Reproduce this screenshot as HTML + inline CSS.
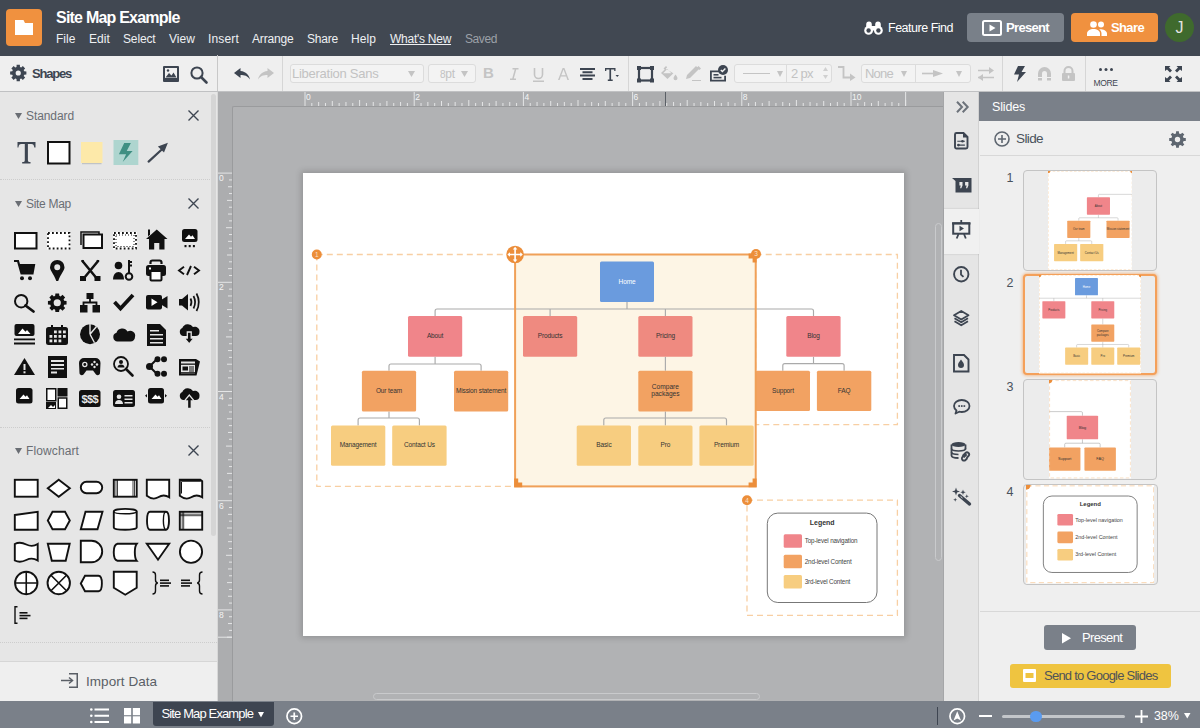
<!DOCTYPE html>
<html><head><meta charset="utf-8">
<style>
*{margin:0;padding:0;box-sizing:border-box}
body{width:1200px;height:728px;overflow:hidden;position:relative;font-family:"Liberation Sans",sans-serif;background:#b1b2b4}
.a{position:absolute}
svg{position:absolute;overflow:visible}
.hdr{left:0;top:0;width:1200px;height:56px;background:#414852}
.menu{top:32px;color:#eef0f2;font-size:12px;line-height:14px;white-space:nowrap}
.tb{left:0;top:56px;width:1200px;height:36px;background:#efefef;border-bottom:1px solid #c0c1c3}
.vdiv{width:1px;background:#d6d6d6}
.box{border:1px solid #dcdcdc;border-radius:3px;background:#f3f3f3}
.lp{left:0;top:92px;width:217px;height:609px;background:#e6e6e6}
.sh{color:#6a6e74;font-size:12px;line-height:14px}
.hline{height:1px;background:#d0d0d0}
.bb{left:0;top:701px;width:1200px;height:27px;background:#7a8089}
.rs{left:943px;top:92px;width:35px;height:609px;background:#e5e5e5;border-left:1px solid #a5a6a8}
.sp{left:978px;top:92px;width:222px;height:609px;background:#efefef;border-left:1px solid #d2d2d2}
.ico{fill:#3d4551}
.lt{fill:#c4c4c4}
</style></head><body>

<!-- HEADER -->
<div class="a hdr"></div>
<div class="a" style="left:6px;top:9px;width:36px;height:37px;background:#f0913f;border-radius:4px"></div>
<svg style="left:15px;top:20px" width="18" height="15" viewBox="0 0 18 15"><path d="M0 0H8.5L10 3H18V15H0Z" fill="#fff"/></svg>
<div class="a" style="left:56px;top:8px;color:#fff;font-weight:bold;font-size:16px;line-height:20px;letter-spacing:-0.78px">Site Map Example</div>
<div class="a menu" style="letter-spacing:0.04px;left:56px">File</div>
<div class="a menu" style="letter-spacing:0.08px;left:89px">Edit</div>
<div class="a menu" style="letter-spacing:-0.14px;left:123px">Select</div>
<div class="a menu" style="letter-spacing:0.05px;left:169px">View</div>
<div class="a menu" style="letter-spacing:0.16px;left:208px">Insert</div>
<div class="a menu" style="letter-spacing:-0.17px;left:252px">Arrange</div>
<div class="a menu" style="letter-spacing:-0.21px;left:307px">Share</div>
<div class="a menu" style="letter-spacing:0.08px;left:351px">Help</div>
<div class="a menu" style="letter-spacing:-0.26px;left:390px;text-decoration:underline">What's New</div>
<div class="a menu" style="letter-spacing:-0.41px;left:465px;color:#9ca1a8">Saved</div>

<!-- HEADER RIGHT -->
<svg style="left:864px;top:21px" width="19" height="14" viewBox="0 0 19 14"><path d="M2.2 8V3.5Q2.2 0.5 5 0.5Q7.8 0.5 7.8 3.5V5h3.4V3.5Q11.2 0.5 14 0.5Q16.8 0.5 16.8 3.5V8Z" fill="#fff"/><circle cx="4.6" cy="9.4" r="4.4" fill="#fff"/><circle cx="14.4" cy="9.4" r="4.4" fill="#fff"/><rect x="7" y="6" width="5" height="3.5" fill="#fff"/><circle cx="4.6" cy="9.5" r="2.2" fill="#414852"/><circle cx="14.4" cy="9.5" r="2.2" fill="#414852"/></svg>
<div class="a" style="left:888px;top:21px;color:#fff;font-size:12.5px;line-height:14px;letter-spacing:-0.49px">Feature Find</div>
<div class="a" style="left:967px;top:13px;width:97px;height:29px;background:#798089;border-radius:4px"></div>
<svg style="left:982px;top:19.5px" width="20" height="16" viewBox="0 0 20 16"><rect x="1" y="1" width="18" height="14" rx="1.5" fill="none" stroke="#fff" stroke-width="2"/><path d="M7.5 4.5L13.5 8L7.5 11.5Z" fill="#fff"/></svg>
<div class="a" style="left:1006px;top:20px;color:#fff;font-weight:bold;font-size:13px;line-height:15px;letter-spacing:-0.67px">Present</div>
<div class="a" style="left:1071px;top:13px;width:87px;height:29px;background:#f0913f;border-radius:4px"></div>
<svg style="left:1087px;top:20.5px" width="20" height="15" viewBox="0 0 20 15"><circle cx="6.5" cy="3.5" r="3.3" fill="#fff"/><circle cx="14" cy="3.5" r="3" fill="#fff"/><path d="M0 15v-2.5C0 10 3 8 6.5 8S13 10 13 12.5V15Z" fill="#fff"/><path d="M12 8.3C15.5 8 20 9.5 20 12.5V15h-5.5v-2.5c0-1.8-1-3.2-2.5-4.2Z" fill="#fff"/></svg>
<div class="a" style="left:1111px;top:20px;color:#fff;font-weight:bold;font-size:13px;line-height:15px;letter-spacing:-0.63px">Share</div>
<div class="a" style="left:1165px;top:13px;width:29px;height:29px;background:#3f6a2d;border-radius:50%"></div>
<div class="a" style="left:1165px;top:19px;width:29px;text-align:center;color:#e4e4e4;font-size:16px;line-height:18px">J</div>

<!-- TOOLBAR -->
<div class="a tb"></div>
<div class="a vdiv" style="left:217px;top:55px;height:36px;background:#c8c8c8"></div>
<svg style="left:9.5px;top:64.5px" width="17" height="16" viewBox="0 0 17 16"><path fill-rule="evenodd" class="ico" d="M6.52 2.05 L6.63 -0.14 L9.87 -0.14 L9.98 2.05 L11.24 2.57 L12.86 1.10 L15.15 3.39 L13.68 5.01 L14.20 6.27 L16.39 6.38 L16.39 9.62 L14.20 9.73 L13.68 10.99 L15.15 12.61 L12.86 14.90 L11.24 13.43 L9.98 13.95 L9.87 16.14 L6.63 16.14 L6.52 13.95 L5.26 13.43 L3.64 14.90 L1.35 12.61 L2.82 10.99 L2.30 9.73 L0.11 9.62 L0.11 6.38 L2.30 6.27 L2.82 5.01 L1.35 3.39 L3.64 1.10 L5.26 2.57ZM10.85 8.00A2.6 2.6 0 1 0 5.65 8.00A2.6 2.6 0 1 0 10.85 8.00Z"/></svg>
<div class="a" style="left:32px;top:66px;color:#3d4551;font-weight:bold;font-size:13px;line-height:15px;letter-spacing:-1.21px">Shapes</div>
<svg style="left:162.5px;top:65.5px" width="16" height="16" viewBox="0 0 16 16"><rect x="0" y="0" width="16" height="16" rx="1" class="ico"/><rect x="2" y="2" width="12" height="10" fill="#f1f1f1"/><path d="M2.5 11.5L6 7l2.5 2.5L10.5 6.5 13.5 11.5Z" class="ico"/><circle cx="5" cy="4.5" r="1.2" class="ico"/></svg>
<svg style="left:190px;top:65.5px" width="18" height="18" viewBox="0 0 18 18"><circle cx="7" cy="7" r="5.6" fill="none" stroke="#3d4551" stroke-width="2"/><path d="M11 11L16.5 16.5" stroke="#3d4551" stroke-width="2.6" stroke-linecap="round"/></svg>
<!-- undo redo -->
<svg style="left:233.5px;top:67.5px" width="16" height="12" viewBox="0 0 16 12"><path d="M6.5 0L0 5l6.5 5V7c4 0 7 .8 9.5 4.5C15 7 12 3.5 6.5 3Z" class="ico"/></svg>
<svg style="left:257.5px;top:67.5px" width="16" height="12" viewBox="0 0 16 12"><path d="M9.5 0L16 5l-6.5 5V7C5.5 7 2.5 7.8 0 11.5 1 7 4 3.5 9.5 3Z" class="lt"/></svg>
<div class="a vdiv" style="left:282px;top:56px;height:35px"></div>
<div class="a box" style="left:289.5px;top:64px;width:134px;height:19px"></div>
<div class="a" style="left:292px;top:66px;color:#c2c2c2;font-size:13px;line-height:15px;letter-spacing:-0.26px">Liberation Sans</div>
<svg style="left:407.5px;top:71px" width="7" height="6" viewBox="0 0 7 6"><path d="M0 0H7L3.5 6Z" class="lt"/></svg>
<div class="a box" style="left:428px;top:64px;width:47.5px;height:19px"></div>
<div class="a" style="left:440px;top:67px;color:#c2c2c2;font-size:12px;line-height:14px;letter-spacing:-0.3px"><span style="font-size:10px">8</span>pt</div>
<svg style="left:461px;top:71px" width="7" height="6" viewBox="0 0 7 6"><path d="M0 0H7L3.5 6Z" class="lt"/></svg>
<div class="a" style="left:483px;top:64px;color:#c4c4c4;font-weight:bold;font-size:15px;line-height:18px">B</div>
<svg style="left:509.5px;top:68px" width="9" height="12" viewBox="0 0 9 12"><path d="M2.5 0.75h6M0 11.25h6M5.7 0.75L2.8 11.25" stroke="#c4c4c4" stroke-width="1.5" fill="none"/></svg>
<svg style="left:532.5px;top:67.5px" width="11" height="14" viewBox="0 0 11 14"><path d="M1.5 0v6.5a4 4 0 0 0 8 0V0" fill="none" stroke="#c4c4c4" stroke-width="1.6"/><rect x="0" y="12.5" width="11" height="1.5" class="lt"/></svg>
<svg style="left:557.5px;top:68px" width="11" height="12" viewBox="0 0 11 12"><path d="M0 12L4.6 0h1.8L11 12H9.4L8.2 8.6H2.8L1.6 12ZM3.3 7.2h4.4L5.5 1.5Z" class="lt"/></svg>
<svg style="left:580px;top:68px" width="15" height="12" viewBox="0 0 15 12"><path d="M0 0h15v2H0ZM2.5 3.3h10v2h-10ZM0 6.6h15v2H0ZM2.5 10h10v2h-10Z" class="ico"/></svg>
<svg style="left:605px;top:67.5px" width="14" height="13" viewBox="0 0 14 13"><path d="M0 0h10.5v3H9.2V1.5H6.1v10H7.7V13H2.8v-1.5H4.4v-10H1.3V3H0Z" class="ico"/><path d="M10.5 7h3.5l-1.75 2Z" class="ico"/></svg>
<div class="a vdiv" style="left:628px;top:56px;height:35px"></div>
<svg style="left:637px;top:65.5px" width="17" height="16.5" viewBox="0 0 17 16.5"><rect x="2" y="2" width="13" height="12.5" fill="none" stroke="#3d4551" stroke-width="2.2"/><rect x="0" y="0" width="4" height="4" class="ico"/><rect x="13" y="0" width="4" height="4" class="ico"/><rect x="0" y="12.5" width="4" height="4" class="ico"/><rect x="13" y="12.5" width="4" height="4" class="ico"/></svg>
<svg style="left:661px;top:66px" width="17" height="15" viewBox="0 0 17 15"><path d="M5 0l1.2 1.2-1.5 1.5L12.4 7.2 6.5 13 0 7 3.7 3.6 2.5 2.5ZM2.2 7.2h8.2L6.3 3.1Z" class="lt"/><path d="M14.5 8.5c1 1.5 2 2.6 2 3.8a2 2 0 0 1-4 0c0-1.2 1-2.3 2-3.8Z" class="lt"/></svg>
<svg style="left:686px;top:66px" width="15" height="15" viewBox="0 0 15 15"><path d="M0 13l1-4L10 0l3 3-9 9ZM11 1.5l1.5-1.5 2.5 2.5L13.5 4Z" class="lt"/><rect x="6" y="14" width="9" height="1" class="lt"/></svg>
<svg style="left:708.5px;top:65px" width="19" height="16.5" viewBox="0 0 19 16.5"><path d="M1 5.5h9v1.8H2.8v7.4h12.4v-4H17v5.8H1Z" class="ico"/><rect x="4.5" y="9" width="5" height="1.6" class="ico"/><rect x="4.5" y="11.8" width="8" height="1.6" class="ico"/><circle cx="14" cy="5" r="5" class="ico"/><path d="M11.8 5l1.6 1.6 3-3" fill="none" stroke="#f1f1f1" stroke-width="1.4"/></svg>
<div class="a box" style="left:733.5px;top:64px;width:98.5px;height:19px"></div>
<div class="a vdiv" style="left:786px;top:65px;height:17px;background:#dcdcdc"></div>
<div class="a" style="left:743px;top:73px;width:26.5px;height:1.2px;background:#c4c4c4"></div>
<svg style="left:777px;top:71px" width="6" height="6" viewBox="0 0 6 6"><path d="M0 0H6L3 6Z" class="lt"/></svg>
<div class="a" style="left:791px;top:66px;color:#c2c2c2;font-size:13px;line-height:15px;letter-spacing:-0.71px">2 px</div>
<svg style="left:823px;top:67px" width="5" height="12" viewBox="0 0 5 12"><path d="M0 4L2.5 0 5 4ZM0 8h5l-2.5 4Z" fill="#d0d0d0"/></svg>
<svg style="left:838px;top:65.5px" width="18" height="15" viewBox="0 0 18 15"><path d="M0 1h5.5v10.5H13" fill="none" stroke="#c4c4c4" stroke-width="1.8"/><path d="M12 7.5l5.5 4L12 15Z" class="lt"/></svg>
<div class="a box" style="left:861px;top:64px;width:109.5px;height:19px"></div>
<div class="a vdiv" style="left:915px;top:65px;height:17px;background:#dcdcdc"></div>
<div class="a" style="left:865px;top:66px;color:#c2c2c2;font-size:13px;line-height:15px;letter-spacing:-0.77px">None</div>
<svg style="left:900.5px;top:71px" width="6" height="6" viewBox="0 0 6 6"><path d="M0 0H6L3 6Z" class="lt"/></svg>
<svg style="left:922px;top:70px" width="21" height="7" viewBox="0 0 21 7"><rect x="0" y="2.7" width="14" height="1.6" class="lt"/><path d="M11 0l10 3.5L11 7Z" class="lt"/></svg>
<svg style="left:955.5px;top:71px" width="6" height="6" viewBox="0 0 6 6"><path d="M0 0H6L3 6Z" class="lt"/></svg>
<svg style="left:978px;top:67px" width="16" height="14" viewBox="0 0 16 14"><path d="M0 3.5h12M0 10.5h16" stroke="#c4c4c4" stroke-width="1.6"/><path d="M11 0l5 3.5-5 3.5ZM5 7l-5 3.5L5 14Z" class="lt"/></svg>
<div class="a vdiv" style="left:1002px;top:56px;height:35px"></div>
<svg style="left:1013.5px;top:66px" width="12" height="16" viewBox="0 0 12 16"><path d="M4 0h7L7.5 6H12L3 16l2-7.5H0Z" class="ico"/></svg>
<svg style="left:1037.5px;top:67px" width="13" height="13.5" viewBox="0 0 13 13.5"><path d="M0 6.5a6.5 6.5 0 0 1 13 0v7h-4v-7a2.5 2.5 0 0 0-5 0v7H0Z" class="lt"/><rect x="0" y="10" width="4" height="1" fill="#f1f1f1"/><rect x="9" y="10" width="4" height="1" fill="#f1f1f1"/></svg>
<svg style="left:1061.5px;top:66.5px" width="13" height="14" viewBox="0 0 13 14"><path d="M2.5 6V4a4 4 0 0 1 8 0v2" fill="none" stroke="#c4c4c4" stroke-width="2"/><rect x="0" y="6" width="13" height="8" rx="1" class="lt"/><rect x="5.8" y="8.5" width="1.5" height="3" fill="#f1f1f1"/></svg>
<div class="a vdiv" style="left:1085px;top:56px;height:35px"></div>
<svg style="left:1099px;top:67.5px" width="14" height="3" viewBox="0 0 14 3"><circle cx="1.5" cy="1.5" r="1.5" class="ico"/><circle cx="7" cy="1.5" r="1.5" class="ico"/><circle cx="12.5" cy="1.5" r="1.5" class="ico"/></svg>
<div class="a" style="left:1093.5px;top:79px;color:#3d4551;font-size:8.5px;line-height:9px;letter-spacing:-0.35px">MORE</div>
<svg style="left:1165px;top:66px" width="17" height="16" viewBox="0 0 17 16"><path d="M0 0h5.5L4 1.5l3 3L5 6.5l-3-3L0 5ZM17 0h-5.5L13 1.5l-3 3L12 6.5l3-3L17 5ZM0 16h5.5L4 14.5l3-3L5 9.5l-3 3L0 11ZM17 16h-5.5L13 14.5l-3-3L12 9.5l3 3L17 11Z" class="ico"/></svg>

<!-- CANVAS -->
<div class="a" style="left:218px;top:92px;width:725px;height:609px;background:#acadaf"></div>
<div class="a" style="left:232px;top:106px;width:711px;height:595px;background:#b1b2b4;border-left:1.5px solid #9a9b9d;border-top:1.5px solid #9a9b9d;border-top-left-radius:2px"></div>
<svg style="left:232px;top:92px" width="711" height="14" viewBox="0 0 711 14"><g fill="#e4e5e6"><rect x="72.50" y="0" width="1" height="14"/><rect x="79.32" y="11" width="1" height="3"/><rect x="86.15" y="10" width="1" height="4"/><rect x="92.98" y="11" width="1" height="3"/><rect x="99.80" y="9" width="1" height="5"/><rect x="106.62" y="11" width="1" height="3"/><rect x="113.45" y="10" width="1" height="4"/><rect x="120.27" y="11" width="1" height="3"/><rect x="127.10" y="8" width="1" height="6"/><rect x="133.93" y="11" width="1" height="3"/><rect x="140.75" y="10" width="1" height="4"/><rect x="147.57" y="11" width="1" height="3"/><rect x="154.40" y="9" width="1" height="5"/><rect x="161.23" y="11" width="1" height="3"/><rect x="168.05" y="10" width="1" height="4"/><rect x="174.88" y="11" width="1" height="3"/><rect x="181.70" y="0" width="1" height="14"/><rect x="188.52" y="11" width="1" height="3"/><rect x="195.35" y="10" width="1" height="4"/><rect x="202.18" y="11" width="1" height="3"/><rect x="209.00" y="9" width="1" height="5"/><rect x="215.83" y="11" width="1" height="3"/><rect x="222.65" y="10" width="1" height="4"/><rect x="229.48" y="11" width="1" height="3"/><rect x="236.30" y="8" width="1" height="6"/><rect x="243.12" y="11" width="1" height="3"/><rect x="249.95" y="10" width="1" height="4"/><rect x="256.77" y="11" width="1" height="3"/><rect x="263.60" y="9" width="1" height="5"/><rect x="270.43" y="11" width="1" height="3"/><rect x="277.25" y="10" width="1" height="4"/><rect x="284.08" y="11" width="1" height="3"/><rect x="290.90" y="0" width="1" height="14"/><rect x="297.73" y="11" width="1" height="3"/><rect x="304.55" y="10" width="1" height="4"/><rect x="311.38" y="11" width="1" height="3"/><rect x="318.20" y="9" width="1" height="5"/><rect x="325.02" y="11" width="1" height="3"/><rect x="331.85" y="10" width="1" height="4"/><rect x="338.67" y="11" width="1" height="3"/><rect x="345.50" y="8" width="1" height="6"/><rect x="352.33" y="11" width="1" height="3"/><rect x="359.15" y="10" width="1" height="4"/><rect x="365.98" y="11" width="1" height="3"/><rect x="372.80" y="9" width="1" height="5"/><rect x="379.62" y="11" width="1" height="3"/><rect x="386.45" y="10" width="1" height="4"/><rect x="393.28" y="11" width="1" height="3"/><rect x="400.10" y="0" width="1" height="14"/><rect x="406.92" y="11" width="1" height="3"/><rect x="413.75" y="10" width="1" height="4"/><rect x="420.58" y="11" width="1" height="3"/><rect x="427.40" y="9" width="1" height="5"/><rect x="434.23" y="11" width="1" height="3"/><rect x="441.05" y="10" width="1" height="4"/><rect x="447.88" y="11" width="1" height="3"/><rect x="454.70" y="8" width="1" height="6"/><rect x="461.53" y="11" width="1" height="3"/><rect x="468.35" y="10" width="1" height="4"/><rect x="475.17" y="11" width="1" height="3"/><rect x="482.00" y="9" width="1" height="5"/><rect x="488.83" y="11" width="1" height="3"/><rect x="495.65" y="10" width="1" height="4"/><rect x="502.48" y="11" width="1" height="3"/><rect x="509.30" y="0" width="1" height="14"/><rect x="516.12" y="11" width="1" height="3"/><rect x="522.95" y="10" width="1" height="4"/><rect x="529.78" y="11" width="1" height="3"/><rect x="536.60" y="9" width="1" height="5"/><rect x="543.42" y="11" width="1" height="3"/><rect x="550.25" y="10" width="1" height="4"/><rect x="557.08" y="11" width="1" height="3"/><rect x="563.90" y="8" width="1" height="6"/><rect x="570.73" y="11" width="1" height="3"/><rect x="577.55" y="10" width="1" height="4"/><rect x="584.38" y="11" width="1" height="3"/><rect x="591.20" y="9" width="1" height="5"/><rect x="598.02" y="11" width="1" height="3"/><rect x="604.85" y="10" width="1" height="4"/><rect x="611.68" y="11" width="1" height="3"/><rect x="618.50" y="0" width="1" height="14"/><rect x="625.33" y="11" width="1" height="3"/><rect x="632.15" y="10" width="1" height="4"/><rect x="638.98" y="11" width="1" height="3"/><rect x="645.80" y="9" width="1" height="5"/><rect x="652.62" y="11" width="1" height="3"/><rect x="659.45" y="10" width="1" height="4"/><rect x="666.27" y="11" width="1" height="3"/><rect x="673.10" y="8" width="1" height="6"/></g><g fill="#f4f4f4" font-family="Liberation Sans" font-size="8.5"><text x="74.0" y="7.6">0</text><text x="183.2" y="7.6">2</text><text x="292.4" y="7.6">4</text><text x="401.6" y="7.6">6</text><text x="510.8" y="7.6">8</text><text x="620.0" y="7.6">10</text></g><rect x="673.10" y="0" width="1" height="14" fill="#e4e5e6"/><rect x="433" y="0" width="1" height="14" fill="#5a5f66"/></svg>
<svg style="left:218px;top:106px" width="14" height="595" viewBox="0 0 14 595"><g fill="#e4e5e6"><rect x="0" y="66.60" width="14" height="1"/><rect x="11" y="73.42" width="3" height="1"/><rect x="10" y="80.25" width="4" height="1"/><rect x="11" y="87.07" width="3" height="1"/><rect x="9" y="93.90" width="5" height="1"/><rect x="11" y="100.72" width="3" height="1"/><rect x="10" y="107.55" width="4" height="1"/><rect x="11" y="114.38" width="3" height="1"/><rect x="8" y="121.20" width="6" height="1"/><rect x="11" y="128.03" width="3" height="1"/><rect x="10" y="134.85" width="4" height="1"/><rect x="11" y="141.68" width="3" height="1"/><rect x="9" y="148.50" width="5" height="1"/><rect x="11" y="155.32" width="3" height="1"/><rect x="10" y="162.15" width="4" height="1"/><rect x="11" y="168.98" width="3" height="1"/><rect x="0" y="175.80" width="14" height="1"/><rect x="11" y="182.62" width="3" height="1"/><rect x="10" y="189.45" width="4" height="1"/><rect x="11" y="196.27" width="3" height="1"/><rect x="9" y="203.10" width="5" height="1"/><rect x="11" y="209.93" width="3" height="1"/><rect x="10" y="216.75" width="4" height="1"/><rect x="11" y="223.57" width="3" height="1"/><rect x="8" y="230.40" width="6" height="1"/><rect x="11" y="237.23" width="3" height="1"/><rect x="10" y="244.05" width="4" height="1"/><rect x="11" y="250.88" width="3" height="1"/><rect x="9" y="257.70" width="5" height="1"/><rect x="11" y="264.52" width="3" height="1"/><rect x="10" y="271.35" width="4" height="1"/><rect x="11" y="278.18" width="3" height="1"/><rect x="0" y="285.00" width="14" height="1"/><rect x="11" y="291.82" width="3" height="1"/><rect x="10" y="298.65" width="4" height="1"/><rect x="11" y="305.48" width="3" height="1"/><rect x="9" y="312.30" width="5" height="1"/><rect x="11" y="319.12" width="3" height="1"/><rect x="10" y="325.95" width="4" height="1"/><rect x="11" y="332.77" width="3" height="1"/><rect x="8" y="339.60" width="6" height="1"/><rect x="11" y="346.42" width="3" height="1"/><rect x="10" y="353.25" width="4" height="1"/><rect x="11" y="360.08" width="3" height="1"/><rect x="9" y="366.90" width="5" height="1"/><rect x="11" y="373.73" width="3" height="1"/><rect x="10" y="380.55" width="4" height="1"/><rect x="11" y="387.38" width="3" height="1"/><rect x="0" y="394.20" width="14" height="1"/><rect x="11" y="401.02" width="3" height="1"/><rect x="10" y="407.85" width="4" height="1"/><rect x="11" y="414.67" width="3" height="1"/><rect x="9" y="421.50" width="5" height="1"/><rect x="11" y="428.33" width="3" height="1"/><rect x="10" y="435.15" width="4" height="1"/><rect x="11" y="441.98" width="3" height="1"/><rect x="8" y="448.80" width="6" height="1"/><rect x="11" y="455.62" width="3" height="1"/><rect x="10" y="462.45" width="4" height="1"/><rect x="11" y="469.27" width="3" height="1"/><rect x="9" y="476.10" width="5" height="1"/><rect x="11" y="482.92" width="3" height="1"/><rect x="10" y="489.75" width="4" height="1"/><rect x="11" y="496.58" width="3" height="1"/><rect x="0" y="503.40" width="14" height="1"/><rect x="11" y="510.23" width="3" height="1"/><rect x="10" y="517.05" width="4" height="1"/><rect x="11" y="523.88" width="3" height="1"/><rect x="9" y="530.70" width="5" height="1"/><rect x="0" y="530.70" width="14" height="1"/></g><g fill="#f4f4f4" font-family="Liberation Sans" font-size="8.5"><text x="1" y="75.1">0</text><text x="1" y="184.3">2</text><text x="1" y="293.5">4</text><text x="1" y="402.7">6</text><text x="1" y="511.9">8</text></g></svg>
<div class="a" style="left:303px;top:172.5px;width:601px;height:463.5px;background:#fff;box-shadow:0 0 6px 2px rgba(0,0,0,0.17)"></div>
<!-- DIAGRAM -->
<svg style="left:0;top:0" width="1200" height="728" viewBox="0 0 1200 728" font-family="Liberation Sans">
<path d="M316.8 254.5H515M316.8 254.5V486.4H515" fill="none" stroke="#f8cfa3" stroke-width="1.3" stroke-dasharray="6 4"/>
<rect x="755.7" y="254.5" width="141.7" height="170.2" fill="none" stroke="#f8cfa3" stroke-width="1.3" stroke-dasharray="6 4"/>
<rect x="747" y="500.2" width="150.4" height="115.2" fill="none" stroke="#f8cfa3" stroke-width="1.3" stroke-dasharray="6 4"/>
<rect x="515.1" y="254.5" width="240.6" height="231.9" fill="#fdf5e5"/>
<path d="M627 302.1V309" fill="none" stroke="#aaaaaa" stroke-width="1.15"/><path d="M435.1 316V311Q435.1 309 437.1 309H811.5Q813.5 309 813.5 311V316" fill="none" stroke="#aaaaaa" stroke-width="1.15"/><path d="M550.1 309V316" fill="none" stroke="#aaaaaa" stroke-width="1.15"/><path d="M665.4 309V316" fill="none" stroke="#aaaaaa" stroke-width="1.15"/>
<path d="M435.1 356.8V364" fill="none" stroke="#aaaaaa" stroke-width="1.15"/><path d="M389 370.7V366Q389 364 391 364H479.1Q481.1 364 481.1 366V370.7" fill="none" stroke="#aaaaaa" stroke-width="1.15"/>
<path d="M389 411.4V418" fill="none" stroke="#aaaaaa" stroke-width="1.15"/><path d="M358.1 425.4V420Q358.1 418 360.1 418H417.4Q419.4 418 419.4 420V425.4" fill="none" stroke="#aaaaaa" stroke-width="1.15"/>
<path d="M665.4 356.8V370.7" fill="none" stroke="#aaaaaa" stroke-width="1.15"/>
<path d="M665.4 411.4V418" fill="none" stroke="#aaaaaa" stroke-width="1.15"/><path d="M603.8 425.4V420Q603.8 418 605.8 418H724.5Q726.5 418 726.5 420V425.4" fill="none" stroke="#aaaaaa" stroke-width="1.15"/><path d="M665.4 418V425.4" fill="none" stroke="#aaaaaa" stroke-width="1.15"/>
<path d="M813.5 356.8V363.6" fill="none" stroke="#aaaaaa" stroke-width="1.15"/><path d="M782.8 370.8V365.6Q782.8 363.6 784.8 363.6H842.1Q844.1 363.6 844.1 365.6V370.8" fill="none" stroke="#aaaaaa" stroke-width="1.15"/>
<rect x="600" y="261.4" width="54.0" height="40.7" rx="1.5" fill="#6a9bde"/><text x="627.0" y="283.6" font-size="6.5" fill="#fff" text-anchor="middle" letter-spacing="-0.12">Home</text>
<rect x="408" y="316" width="54.2" height="40.8" rx="1.5" fill="#f0858a"/><text x="435.1" y="338.3" font-size="6.5" fill="#333" text-anchor="middle" letter-spacing="-0.12">About</text>
<rect x="523" y="316" width="54.2" height="40.8" rx="1.5" fill="#ef8a80"/><text x="550.1" y="338.3" font-size="6.5" fill="#333" text-anchor="middle" letter-spacing="-0.12">Products</text>
<rect x="638.3" y="316" width="54.2" height="40.8" rx="1.5" fill="#ef8a80"/><text x="665.4" y="338.3" font-size="6.5" fill="#333" text-anchor="middle" letter-spacing="-0.12">Pricing</text>
<rect x="786.3" y="316" width="54.3" height="40.8" rx="1.5" fill="#f0858a"/><text x="813.5" y="338.3" font-size="6.5" fill="#333" text-anchor="middle" letter-spacing="-0.12">Blog</text>
<rect x="361.9" y="370.7" width="54.2" height="40.7" rx="1.5" fill="#f2a262"/><text x="389.0" y="392.9" font-size="6.5" fill="#333" text-anchor="middle" letter-spacing="-0.12">Our team</text>
<rect x="454" y="370.7" width="54.2" height="40.7" rx="1.5" fill="#f2a262"/><text x="481.1" y="392.9" font-size="6.5" fill="#333" text-anchor="middle" letter-spacing="-0.12">Mission statement</text>
<rect x="638.3" y="370.7" width="54.2" height="40.7" rx="1.5" fill="#f2a262"/><text x="665.4" y="389.0" font-size="6.6" fill="#333" text-anchor="middle">Compare</text><text x="665.4" y="396.4" font-size="6.6" fill="#333" text-anchor="middle">packages</text>
<rect x="755.7" y="370.8" width="54.3" height="40.3" rx="1.5" fill="#f2a262"/><text x="782.9" y="392.9" font-size="6.5" fill="#333" text-anchor="middle" letter-spacing="-0.12">Support</text>
<rect x="816.9" y="370.8" width="54.4" height="40.3" rx="1.5" fill="#f2a262"/><text x="844.1" y="392.9" font-size="6.5" fill="#333" text-anchor="middle" letter-spacing="-0.12">FAQ</text>
<rect x="331" y="425.4" width="54.3" height="40.3" rx="1.5" fill="#f7cd80"/><text x="358.1" y="447.4" font-size="6.5" fill="#333" text-anchor="middle" letter-spacing="-0.12">Management</text>
<rect x="392.2" y="425.4" width="54.4" height="40.3" rx="1.5" fill="#f7cd80"/><text x="419.4" y="447.4" font-size="6.5" fill="#333" text-anchor="middle" letter-spacing="-0.12">Contact Us</text>
<rect x="576.7" y="425.4" width="54.3" height="40.3" rx="1.5" fill="#f7cd80"/><text x="603.9" y="447.4" font-size="6.5" fill="#333" text-anchor="middle" letter-spacing="-0.12">Basic</text>
<rect x="638.3" y="425.4" width="54.2" height="40.3" rx="1.5" fill="#f7cd80"/><text x="665.4" y="447.4" font-size="6.5" fill="#333" text-anchor="middle" letter-spacing="-0.12">Pro</text>
<rect x="699.4" y="425.4" width="54.3" height="40.3" rx="1.5" fill="#f7cd80"/><text x="726.5" y="447.4" font-size="6.5" fill="#333" text-anchor="middle" letter-spacing="-0.12">Premium</text>
<rect x="515.1" y="254.5" width="240.6" height="231.9" fill="none" stroke="#f0a058" stroke-width="2"/>
<path d="M514.2 487.3V478.5h4v4h4v4.8Z" fill="#ec8e3a"/>
<path d="M756.6 487.3V478.5h-4v4h-4v4.8Z" fill="#ec8e3a"/>
<path d="M756.6 253.6V262.4h-4v-4h-4v-4.8Z" fill="#ec8e3a"/>
<circle cx="515.1" cy="254.5" r="8.8" fill="#ec8e3a"/><path d="M515.1 248v13M508.6 254.5h13" stroke="#fff" stroke-width="1.6"/><path d="M515.1 246.8l-2.3 2.6h4.6ZM515.1 262.2l-2.3-2.6h4.6ZM507.4 254.5l2.6-2.3v4.6ZM522.8 254.5l-2.6-2.3v4.6Z" fill="#fff"/>
<circle cx="316.8" cy="254.5" r="5" fill="#ec8e3a"/><text x="316.8" y="256.8" font-size="6.5" fill="#fbe3c8" text-anchor="middle">1</text><circle cx="756" cy="254" r="5" fill="#ec8e3a"/><text x="756" y="256.3" font-size="6.5" fill="#fbe3c8" text-anchor="middle">3</text><circle cx="747" cy="500.2" r="5" fill="#ec8e3a"/><text x="747" y="502.5" font-size="6.5" fill="#fbe3c8" text-anchor="middle">4</text>
<rect x="767.3" y="513.1" width="109.7" height="89.4" rx="10.5" fill="#fff" stroke="#777" stroke-width="1"/>
<text x="822.2" y="525" font-size="7" font-weight="bold" fill="#333" text-anchor="middle">Legend</text>
<rect x="783.7" y="534.2" width="18.3" height="13.5" rx="1.5" fill="#f0858a"/><text x="804.7" y="543.0" font-size="6.3" fill="#444" letter-spacing="-0.15">Top-level navigation</text>
<rect x="783.7" y="554.7" width="18.3" height="13.5" rx="1.5" fill="#f2a262"/><text x="804.7" y="563.5" font-size="6.3" fill="#444" letter-spacing="-0.15">2nd-level Content</text>
<rect x="783.7" y="575" width="18.3" height="13.5" rx="1.5" fill="#f7cd80"/><text x="804.7" y="583.8" font-size="6.3" fill="#444" letter-spacing="-0.15">3rd-level Content</text>
</svg>
<!-- /DIAGRAM -->
<div class="a" style="left:373px;top:693px;width:387px;height:7px;border:1.5px solid #c9cacc;border-radius:4px"></div>
<div class="a" style="left:934.5px;top:222.5px;width:7px;height:338px;border:1.5px solid #c9cacc;border-radius:4px"></div>

<!-- LEFT PANEL -->
<div class="a lp"></div>
<div class="a" style="left:211px;top:94px;width:5px;height:442px;background:#d5d5d5;border-radius:3px"></div>
<div class="a" style="left:0;top:661px;width:217px;height:40px;background:#efefef;border-top:1px solid #d6d6d6"></div>
<div class="a" style="left:0;top:179px;width:210px;height:1px;border-top:1px dotted #cdcdcd"></div>
<div class="a" style="left:0;top:427px;width:210px;height:1px;border-top:1px dotted #cdcdcd"></div>
<div class="a" style="left:0;top:642px;width:217px;height:1px;border-top:1px dotted #cdcdcd"></div>
<div class="a" style="left:217px;top:92px;width:1px;height:609px;background:#d8d8d8"></div>
<svg style="left:15px;top:112.5px" width="7" height="6" viewBox="0 0 7 6"><path d="M0 0H7L3.5 6Z" fill="#6a6e74"/></svg><div class="a sh" style="letter-spacing:-0.09px;left:26px;top:109px">Standard</div><svg style="left:188px;top:110px" width="11" height="11" viewBox="0 0 11 11"><path d="M0.5 0.5L10.5 10.5M10.5 0.5L0.5 10.5" stroke="#3d4551" stroke-width="1.35"/></svg><svg style="left:15px;top:200.5px" width="7" height="6" viewBox="0 0 7 6"><path d="M0 0H7L3.5 6Z" fill="#6a6e74"/></svg><div class="a sh" style="letter-spacing:-0.3px;left:26px;top:197px">Site Map</div><svg style="left:188px;top:198px" width="11" height="11" viewBox="0 0 11 11"><path d="M0.5 0.5L10.5 10.5M10.5 0.5L0.5 10.5" stroke="#3d4551" stroke-width="1.35"/></svg><svg style="left:15px;top:447.5px" width="7" height="6" viewBox="0 0 7 6"><path d="M0 0H7L3.5 6Z" fill="#6a6e74"/></svg><div class="a sh" style="letter-spacing:0.11px;left:26px;top:444px">Flowchart</div><svg style="left:188px;top:445px" width="11" height="11" viewBox="0 0 11 11"><path d="M0.5 0.5L10.5 10.5M10.5 0.5L0.5 10.5" stroke="#3d4551" stroke-width="1.35"/></svg>
<div class="a" style="left:86px;top:674px;color:#5a5f66;font-size:13.5px;line-height:16px;letter-spacing:0.06px">Import Data</div>
<svg style="left:61px;top:673px" width="17" height="15" viewBox="0 0 17 15"><path d="M8 0.75h8.25v13.5H8" fill="none" stroke="#5a5f66" stroke-width="1.5"/><path d="M0 7.5h11" stroke="#5a5f66" stroke-width="1.5"/><path d="M8 4.5l3.5 3-3.5 3" fill="none" stroke="#5a5f66" stroke-width="1.5"/></svg>

<!-- LP ICONS -->
<svg style="left:16.5px;top:141.5px" width="19.0" height="21.5" viewBox="0 0 19.0 21.5" ><path d="M0.5 0h18v5.5h-1.2c-.3-2.5-1-3.6-3-3.6h-3.4v16.3c0 1.4.6 1.7 2.6 1.8v1.4H5.2v-1.4c2-.1 2.6-.4 2.6-1.8V1.9H4.4c-2 0-2.7 1.1-3 3.6H0.5Z" fill="#3d4551"/></svg>
<svg style="left:47px;top:141px" width="23.5" height="23.5" viewBox="0 0 23.5 23.5" ><rect x="1" y="1" width="21.5" height="21.5" fill="#fff" stroke="#111" stroke-width="2"/></svg>
<svg style="left:80.5px;top:142px" width="21.5" height="23.0" viewBox="0 0 21.5 23.0" ><rect x="0" y="0" width="21.5" height="21" fill="#fde9a9"/><rect x="1" y="21" width="19.5" height="1.2" fill="#9aa0a6" opacity="0.5"/></svg>
<svg style="left:112.5px;top:140px" width="25.5" height="25.0" viewBox="0 0 25.5 25.0" ><rect x="0.5" y="0" width="24.8" height="25" fill="#aed5cf"/><path d="M11.2 2.9H17.9L13.7 11H19.6L9.7 22.1 13.1 14.25H5.9Z" fill="#3f8f82"/></svg>
<svg style="left:147px;top:141.5px" width="21.5" height="21.0" viewBox="0 0 21.5 21.0" ><path d="M1.6 19.6L14.5 7.8" stroke="#3d4551" stroke-width="2.2" stroke-linecap="round"/><path d="M20.9 0.7L10.9 4.5 17 10.6Z" fill="#3d4551"/></svg>
<svg style="left:14px;top:231.5px" width="23.5" height="17.5" viewBox="0 0 23.5 17.5" ><rect x="1" y="1" width="21.5" height="15.5" fill="#fff" stroke="#111" stroke-width="2"/></svg>
<svg style="left:47px;top:231.5px" width="23.5" height="17.5" viewBox="0 0 23.5 17.5" ><rect x="0" y="0" width="23.5" height="17.5" fill="#fff"/><rect x="1" y="1" width="21.5" height="15.5" fill="none" stroke="#111" stroke-width="1.8" stroke-dasharray="1.8 2.2"/></svg>
<svg style="left:80px;top:231px" width="23.0" height="18.0" viewBox="0 0 23.0 18.0" ><path d="M1 14V1h18v2" fill="none" stroke="#111" stroke-width="1.5"/><rect x="3.5" y="3.5" width="18.5" height="13.5" fill="#fff" stroke="#111" stroke-width="2"/></svg>
<svg style="left:113px;top:231.5px" width="24.0" height="17.5" viewBox="0 0 24.0 17.5" ><rect x="0" y="0" width="24" height="17.5" fill="#fff"/><rect x="1" y="1" width="22" height="15.5" fill="none" stroke="#111" stroke-width="1.8" stroke-dasharray="1.8 2.2"/><rect x="3" y="3" width="18" height="11.5" fill="none" stroke="#111" stroke-width="1" stroke-dasharray="1 2"/></svg>
<svg style="left:145.5px;top:228.5px" width="21.5" height="20.5" viewBox="0 0 21.5 20.5" ><path d="M10.75 0.5L21.5 10h-3v10.5h-5.2v-6.5H8.2v6.5H3V10H0Z" fill="#111"/><path d="M2 0.5h2v5l-2 2Z" fill="#111"/></svg>
<svg style="left:181.5px;top:228.5px" width="15.5" height="19.5" viewBox="0 0 15.5 19.5" ><rect x="0" y="0" width="15.5" height="13" rx="2.5" fill="#111"/><path d="M3 10l4-4.5 2 2.3 1.5-1.5L13 10Z" fill="#fff"/><rect x="2.5" y="16" width="2" height="2.2" fill="#111"/><rect x="6.7" y="16" width="2" height="2.2" fill="#111"/><rect x="10.9" y="16" width="2" height="2.2" fill="#111"/></svg>
<svg style="left:14px;top:260px" width="20.0" height="21.0" viewBox="0 0 20.0 21.0" ><path d="M0 1h4l3.5 12.5h11L20 5H5" fill="none" stroke="#111" stroke-width="2.2"/><path d="M5 5h15l-1.5 8.5h-11Z" fill="#111"/><circ cx="8" cy="18"/><circle cx="8" cy="18.3" r="2" fill="#111"/><circle cx="16" cy="18.3" r="2" fill="#111"/></svg>
<svg style="left:50px;top:260px" width="14.5" height="21.0" viewBox="0 0 14.5 21.0" ><path d="M7.25 0A7.25 7.25 0 0 1 14.5 7.25c0 3.5-3.5 6-6.3 13.75H6.3C3.5 13.25 0 10.75 0 7.25A7.25 7.25 0 0 1 7.25 0ZM7.25 4.2a3 3 0 1 0 0 6 3 3 0 0 0 0-6Z" fill="#111"/></svg>
<svg style="left:80px;top:260px" width="20.5" height="21.0" viewBox="0 0 20.5 21.0" ><path d="M2 0.5L16 17.5M18.5 0.5L4.5 17.5" stroke="#111" stroke-width="2.5"/><path d="M0 16h6v5H0ZM14.5 16h6v5h-6Z" fill="#111"/><path d="M1 0h3l-1 3ZM16.5 0h3l-2 3Z" fill="#111"/></svg>
<svg style="left:113px;top:260px" width="21.0" height="21.0" viewBox="0 0 21.0 21.0" ><circle cx="5.5" cy="5.5" r="3.8" fill="#111"/><path d="M0 19.5c0-4.5 2.3-7.5 5.5-7.5s5.5 3 5.5 7.5Z" fill="#111"/><path d="M16 0v13" stroke="#111" stroke-width="2"/><path d="M16 2h3M16 5.5h3" stroke="#111" stroke-width="1.8"/><circle cx="16" cy="16.5" r="3.3" fill="none" stroke="#111" stroke-width="2"/></svg>
<svg style="left:146px;top:260px" width="20.0" height="21.0" viewBox="0 0 20.0 21.0" ><path d="M4.5 4V2.5Q4.5 0.5 6.5 0.5h7q2 0 2 2V4" fill="none" stroke="#111" stroke-width="2.2"/><rect x="0" y="5" width="20" height="11" rx="2.5" fill="#111"/><rect x="4.5" y="11" width="11" height="9.5" rx="1" fill="#fff" stroke="#111" stroke-width="2"/><rect x="3" y="7.5" width="2" height="2" fill="#fff"/></svg>
<svg style="left:178px;top:265.5px" width="22.0" height="9.0" viewBox="0 0 22.0 9.0" ><path d="M6 0.8L1 4.5l5 3.7M16 0.8l5 3.7-5 3.7M13 0L9 9" fill="none" stroke="#111" stroke-width="1.9"/></svg>
<svg style="left:14px;top:294px" width="20.5" height="18.5" viewBox="0 0 20.5 18.5" ><circle cx="7.2" cy="7.2" r="6.2" fill="none" stroke="#111" stroke-width="2"/><path d="M11.5 11.5L19.5 17.5" stroke="#111" stroke-width="2.8" stroke-linecap="round"/></svg>
<svg style="left:47.5px;top:292.5px" width="18.5" height="19.5" viewBox="0 0 18.5 19.5" ><path fill-rule="evenodd" fill="#111" d="M7.16 2.86 L7.40 0.43 L11.10 0.43 L11.34 2.86 L12.64 3.40 L14.53 1.85 L17.15 4.47 L15.60 6.36 L16.14 7.66 L18.57 7.90 L18.57 11.60 L16.14 11.84 L15.60 13.14 L17.15 15.03 L14.53 17.65 L12.64 16.10 L11.34 16.64 L11.10 19.07 L7.40 19.07 L7.16 16.64 L5.86 16.10 L3.97 17.65 L1.35 15.03 L2.90 13.14 L2.36 11.84 L-0.07 11.60 L-0.07 7.90 L2.36 7.66 L2.90 6.36 L1.35 4.47 L3.97 1.85 L5.86 3.40ZM12.85 9.75A3.6 3.6 0 1 0 5.65 9.75A3.6 3.6 0 1 0 12.85 9.75Z"/></svg>
<svg style="left:80px;top:292.5px" width="20.0" height="19.5" viewBox="0 0 20.0 19.5" ><rect x="6.5" y="0" width="7" height="6" fill="#111"/><path d="M10 6v3.5M3.5 12V9.5h13V12" fill="none" stroke="#111" stroke-width="1.8"/><rect x="0" y="12" width="7.5" height="7.5" fill="#111"/><rect x="12.5" y="12" width="7.5" height="7.5" fill="#111"/></svg>
<svg style="left:114px;top:294px" width="19.5" height="16.0" viewBox="0 0 19.5 16.0" ><path d="M0.5 8l6 6.5L19 1" fill="none" stroke="#111" stroke-width="3.8"/></svg>
<svg style="left:145.5px;top:295px" width="21.5" height="15.0" viewBox="0 0 21.5 15.0" ><rect x="0" y="0" width="16" height="14.5" rx="2" fill="#111"/><path d="M15 5l6.5-4v12.5L15 9.5Z" fill="#111"/><path d="M5.5 3.5l6 3.75-6 3.75Z" fill="#fff"/></svg>
<svg style="left:178.5px;top:292px" width="21.5" height="20.5" viewBox="0 0 21.5 20.5" ><path d="M0 7h3l6-5v16.5l-6-5H0Z" fill="#111"/><path d="M11.5 6.5q2 3.8 0 7.5M14.5 4q3.3 6.3 0 12.5M17.5 1.5q4.6 8.7 0 17.5" fill="none" stroke="#111" stroke-width="1.7"/></svg>
<svg style="left:13.5px;top:324px" width="21.0" height="21.0" viewBox="0 0 21.0 21.0" ><rect x="0.5" y="0" width="20" height="12" rx="2" fill="#111"/><path d="M4 10l4.5-5.5 3 3.3 1.5-1.8L16.5 10Z" fill="#fff"/><rect x="0" y="14.5" width="21" height="1.8" fill="#111"/><rect x="0" y="18.5" width="21" height="2" fill="#111"/></svg>
<svg style="left:45.5px;top:324.5px" width="22.0" height="20.0" viewBox="0 0 22.0 20.0" ><rect x="0" y="2" width="22" height="18" rx="2.5" fill="#111"/><rect x="5" y="0" width="2" height="4" fill="#111"/><rect x="15" y="0" width="2" height="4" fill="#111"/><g fill="#e6e6e6"><rect x="8" y="5.5" width="2.8" height="2.8"/><rect x="12.5" y="5.5" width="2.8" height="2.8"/><rect x="17" y="5.5" width="2.8" height="2.8"/><rect x="3.5" y="10" width="2.8" height="2.8"/><rect x="8" y="10" width="2.8" height="2.8"/><rect x="12.5" y="10" width="2.8" height="2.8"/><rect x="17" y="10" width="2.8" height="2.8"/><rect x="3.5" y="14.5" width="2.8" height="2.8"/><rect x="8" y="14.5" width="2.8" height="2.8"/><rect x="12.5" y="14.5" width="2.8" height="2.8"/></g></svg>
<svg style="left:80px;top:324px" width="20.0" height="20.5" viewBox="0 0 20.0 20.5" ><circle cx="10" cy="10.25" r="10" fill="#111"/><path d="M10 10.25V0M10 10.25L16.5 2.5M10 10.25l4.5 8.5" stroke="#e6e6e6" stroke-width="1.4" fill="none"/></svg>
<svg style="left:112.5px;top:328px" width="22.0" height="13.5" viewBox="0 0 22.0 13.5" ><path d="M4.5 13.5A4.5 4.5 0 0 1 3.5 4.7 6 6 0 0 1 14.5 3.5 5 5 0 0 1 22 9a4.5 4.5 0 0 1-4.5 4.5Z" fill="#111"/></svg>
<svg style="left:146.5px;top:323.5px" width="19.0" height="22.0" viewBox="0 0 19.0 22.0" ><path d="M0 0h13l6 6v16H0Z" fill="#111"/><g fill="#e6e6e6"><rect x="3" y="6" width="9" height="1.5"/><rect x="3" y="10" width="13" height="1.5"/><rect x="3" y="14" width="13" height="1.5"/><rect x="3" y="18" width="13" height="1.5"/></g></svg>
<svg style="left:179px;top:324px" width="20.5" height="21.0" viewBox="0 0 20.5 21.0" ><path d="M4.5 12A4.2 4.2 0 0 1 3.3 4 6 6 0 0 1 14 3 4.8 4.8 0 0 1 20.5 8a4 4 0 0 1-4 4Z" fill="#111"/><path d="M8.3 8h3.9v6h3l-5 6-5-6h3.1Z" fill="#111" stroke="#e6e6e6" stroke-width="1.3"/></svg>
<svg style="left:13.5px;top:358px" width="21.0" height="17.0" viewBox="0 0 21.0 17.0" ><path d="M10.5 0L21 17H0Z" fill="#111"/><rect x="9.5" y="6" width="2" height="6" fill="#e6e6e6"/><rect x="9.5" y="13.3" width="2" height="2" fill="#e6e6e6"/></svg>
<svg style="left:47.5px;top:355.5px" width="19.0" height="22.0" viewBox="0 0 19.0 22.0" ><rect x="0" y="0" width="19" height="22" fill="#111"/><g fill="#e6e6e6"><rect x="3" y="4" width="13" height="2"/><rect x="3" y="8" width="13" height="2"/><rect x="3" y="12" width="13" height="1.5"/><rect x="3" y="15.5" width="6" height="2"/></g></svg>
<svg style="left:79px;top:358px" width="21.5" height="17.0" viewBox="0 0 21.5 17.0" ><path d="M5 0h11.5A5 5 0 0 1 21.5 5l-0.5 10c0 2-2.5 3-4 1.5L14 12.5H7.5L4.5 16.5C3 18 0.5 17 .5 15L0 5A5 5 0 0 1 5 0Z" fill="#111"/><circle cx="5.8" cy="6.5" r="2.7" fill="#e6e6e6"/><circle cx="5.8" cy="6.5" r="1.4" fill="#111"/><g fill="#e6e6e6"><circle cx="15.5" cy="4" r="1.2"/><circle cx="13" cy="6.5" r="1.2"/><circle cx="18" cy="6.5" r="1.2"/><circle cx="15.5" cy="9" r="1.2"/></g></svg>
<svg style="left:113px;top:356px" width="20.5" height="20.5" viewBox="0 0 20.5 20.5" ><circle cx="8" cy="8" r="7" fill="none" stroke="#111" stroke-width="1.8"/><circle cx="8" cy="6" r="2" fill="#111"/><path d="M4.5 11.5c0-2 1.5-3 3.5-3s3.5 1 3.5 3Z" fill="#111"/><path d="M13 13l6.5 6.5" stroke="#111" stroke-width="2.6" stroke-linecap="round"/></svg>
<svg style="left:145.5px;top:356px" width="21.0" height="21.0" viewBox="0 0 21.0 21.0" ><path d="M3.5 10.5L11.5 2.5M3.5 10.5l8 8" stroke="#111" stroke-width="2" fill="none"/><circle cx="3.5" cy="10.5" r="3.5" fill="#111"/><circle cx="11.5" cy="3.2" r="3" fill="#111"/><circle cx="18" cy="3.2" r="3" fill="#111"/><circle cx="11.5" cy="17.8" r="3" fill="#111"/><circle cx="18" cy="17.8" r="3" fill="#111"/></svg>
<svg style="left:178px;top:358px" width="22.0" height="18.0" viewBox="0 0 22.0 18.0" ><path d="M1 1h17l4 2.5-3.5 14H1Z" fill="#111"/><rect x="3" y="3.5" width="14" height="12" fill="#e6e6e6"/><g fill="#111"><rect x="3" y="5.5" width="14" height="1.3"/><rect x="4.5" y="8.5" width="5.5" height="4"/><rect x="11" y="8.5" width="5" height="1"/><rect x="11" y="10.5" width="5" height="1"/><rect x="11" y="12.5" width="5" height="1"/><rect x="3" y="14.2" width="14" height="1.3"/></g></svg>
<svg style="left:15.5px;top:388px" width="16.5" height="15.5" viewBox="0 0 16.5 15.5" ><rect x="0" y="0" width="16.5" height="15.5" rx="2.5" fill="#111"/><path d="M3.5 11l4-4.5 2 2.2 1.5-1.5 2.5 3.8Z" fill="#fff"/></svg>
<svg style="left:46px;top:387.5px" width="21.5" height="21.0" viewBox="0 0 21.5 21.0" ><rect x="0.75" y="0.75" width="9" height="12" fill="#fff" stroke="#111" stroke-width="1.5"/><rect x="11.5" y="0" width="10" height="8.5" fill="#111"/><rect x="0" y="14" width="10" height="7" fill="#111"/><path d="M2 20l3-3 2 2 2-2v3Z" fill="#fff"/><rect x="12.25" y="10" width="8.5" height="10.25" fill="#fff" stroke="#111" stroke-width="1.5"/></svg>
<svg style="left:79px;top:389.5px" width="21.5" height="17.0" viewBox="0 0 21.5 17.0" ><rect x="0" y="0" width="21.5" height="17" rx="2.5" fill="#111"/><text x="10.75" y="13" text-anchor="middle" font-family="Liberation Sans" font-weight="bold" font-size="11" fill="#e6e6e6" letter-spacing="-0.6">$$$</text></svg>
<svg style="left:112.5px;top:389.5px" width="22.0" height="17.0" viewBox="0 0 22.0 17.0" ><rect x="0" y="0" width="22" height="17" rx="2.5" fill="#111"/><circle cx="6" cy="6.8" r="2.3" fill="#e6e6e6"/><path d="M2 14c0-2.5 1.7-4 4-4s4 1.5 4 4Z" fill="#e6e6e6"/><g fill="#e6e6e6"><rect x="11.5" y="5" width="8" height="1.5"/><rect x="11.5" y="8.5" width="8" height="1.5"/><rect x="11.5" y="12" width="8" height="1.5"/></g></svg>
<svg style="left:145px;top:388px" width="22.0" height="15.5" viewBox="0 0 22.0 15.5" ><rect x="3" y="0" width="16" height="15.5" rx="2.5" fill="#111"/><path d="M6.5 11l4-4.5 2 2.2 1.5-1.5 2.5 3.8Z" fill="#fff"/><path d="M0 7.75l2-1.8v3.6ZM22 7.75l-2-1.8v3.6Z" fill="#111"/></svg>
<svg style="left:179px;top:388px" width="20.5" height="20.5" viewBox="0 0 20.5 20.5" ><path d="M4.5 12A4.2 4.2 0 0 1 3.3 4 6 6 0 0 1 14 3 4.8 4.8 0 0 1 20.5 8a4 4 0 0 1-4 4Z" fill="#111"/><path d="M8.5 20.5V13H5.3l5-6 5 6h-3v7.5Z" fill="#111" stroke="#e6e6e6" stroke-width="1.3"/></svg>
<svg style="left:13.5px;top:478.5px" width="24.5" height="18.5" viewBox="0 0 24.5 18.5" ><rect x="0.8" y="0.8" width="22.9" height="16.9" stroke="#111" stroke-width="1.9" fill="#fff"/></svg>
<svg style="left:46.5px;top:478.5px" width="23.5" height="18.5" viewBox="0 0 23.5 18.5" ><path d="M11.75 0.8L22.8 9.25 11.75 17.7 0.8 9.25Z" stroke="#111" stroke-width="1.9" fill="#fff"/></svg>
<svg style="left:80px;top:481px" width="23.0" height="13.0" viewBox="0 0 23.0 13.0" ><rect x="0.8" y="0.8" width="21.4" height="11.4" rx="5.7" stroke="#111" stroke-width="1.9" fill="#fff"/></svg>
<svg style="left:113px;top:478.5px" width="24.5" height="18.5" viewBox="0 0 24.5 18.5" ><rect x="0.8" y="0.8" width="22.9" height="16.9" stroke="#111" stroke-width="1.9" fill="#fff"/><path d="M3 0.8v16.9M4.5 0.8v16.9M20 0.8v16.9M21.5 0.8v16.9" stroke="#111" stroke-width="0.8"/></svg>
<svg style="left:146px;top:478.5px" width="24.0" height="19.5" viewBox="0 0 24.0 19.5" ><path d="M0.8 0.8h22.4v17.5c-4-2.5-7-2.5-11 0s-7.5 1.5-11.4-1.5Z" stroke="#111" stroke-width="1.9" fill="#fff"/></svg>
<svg style="left:179px;top:478.5px" width="24.0" height="19.5" viewBox="0 0 24.0 19.5" ><path d="M0.8 0.8h20.5l1.9 1.5v16c-4-2.5-7-2.5-11 0s-7.5 1.5-11.4-1.5Z" stroke="#111" stroke-width="1.9" fill="#fff"/><path d="M0.8 0.8h21v2H3Z" fill="#111"/><path d="M2.5 2.5v12" stroke="#111" stroke-width="1"/></svg>
<svg style="left:13.5px;top:510.5px" width="24.5" height="19.0" viewBox="0 0 24.5 19.0" ><path d="M0.8 4L23.7 0.8v17.9H0.8Z" stroke="#111" stroke-width="1.9" fill="#fff"/></svg>
<svg style="left:46.5px;top:510.5px" width="23.5" height="19.0" viewBox="0 0 23.5 19.0" ><path d="M5.5 0.8h12.5l4.8 8.7-4.8 8.7H5.5L0.8 9.5Z" stroke="#111" stroke-width="1.9" fill="#fff"/></svg>
<svg style="left:80px;top:510.5px" width="23.0" height="19.0" viewBox="0 0 23.0 19.0" ><path d="M5.5 0.8h17L17.5 18.2H0.8Z" stroke="#111" stroke-width="1.9" fill="#fff"/></svg>
<svg style="left:113px;top:508px" width="24.5" height="22.5" viewBox="0 0 24.5 22.5" ><path d="M0.8 3.5v16c0 3 22.9 3 22.9 0v-16c0-3.5-22.9-3.5-22.9 0Z" stroke="#111" stroke-width="1.9" fill="#fff"/><path d="M0.8 3.5c0 3 22.9 3 22.9 0" fill="none" stroke="#111" stroke-width="1.4"/></svg>
<svg style="left:146px;top:510.5px" width="24.0" height="19.0" viewBox="0 0 24.0 19.0" ><path d="M4 0.8h16c4 0 4 17.9 0 17.9H4c-4 0-4-17.9 0-17.9Z" stroke="#111" stroke-width="1.9" fill="#fff"/><path d="M20 0.8c-3.5 0-3.5 17.9 0 17.9" fill="none" stroke="#111" stroke-width="1.4"/></svg>
<svg style="left:179px;top:510.5px" width="24.0" height="19.0" viewBox="0 0 24.0 19.0" ><rect x="0.8" y="0.8" width="22.4" height="17.9" stroke="#111" stroke-width="1.9" fill="#fff"/><path d="M0.8 3.2h22.4M0.8 4.7h22.4M3.2 0.8v17.9M4.7 0.8v17.9" stroke="#111" stroke-width="0.8"/></svg>
<svg style="left:13.5px;top:542px" width="24.5" height="19.0" viewBox="0 0 24.5 19.0" ><path d="M0.8 2c4-2 7.5-1.5 11.5 0.5s7.5 2 11.4-0.5v16.5c-4-2.5-7.5-2.5-11.4-.5s-7.5 2.5-11.5.5Z" stroke="#111" stroke-width="1.9" fill="#fff"/></svg>
<svg style="left:46.5px;top:542.5px" width="23.5" height="18.5" viewBox="0 0 23.5 18.5" ><path d="M0.8 0.8h21.9l-4 17h-13.9Z" stroke="#111" stroke-width="1.9" fill="#fff"/></svg>
<svg style="left:80px;top:540px" width="23.0" height="23.0" viewBox="0 0 23.0 23.0" ><path d="M0.8 0.8h10.7a10.7 10.7 0 0 1 0 21.4H0.8Z" stroke="#111" stroke-width="1.9" fill="#fff"/></svg>
<svg style="left:113px;top:542.5px" width="24.5" height="18.5" viewBox="0 0 24.5 18.5" ><path d="M4.5 0.8h19.2c-2.5 3-2.5 14 0 17H4.5c-5-1-5-16 0-17Z" stroke="#111" stroke-width="1.9" fill="#fff"/></svg>
<svg style="left:146px;top:543px" width="24.0" height="17.5" viewBox="0 0 24.0 17.5" ><path d="M0.8 0.8h22.4L12 16.7Z" stroke="#111" stroke-width="1.9" fill="#fff"/></svg>
<svg style="left:179px;top:540px" width="24.0" height="23.5" viewBox="0 0 24.0 23.5" ><circle cx="12" cy="11.75" r="11.1" stroke="#111" stroke-width="1.9" fill="#fff"/></svg>
<svg style="left:13.5px;top:571px" width="24.5" height="24.0" viewBox="0 0 24.5 24.0" ><circle cx="12.25" cy="12" r="11.2" stroke="#111" stroke-width="1.9" fill="#fff"/><path d="M12.25 0.8v22.4M1 12h22.5" stroke="#111" stroke-width="1.6"/></svg>
<svg style="left:46.5px;top:571px" width="23.5" height="24.0" viewBox="0 0 23.5 24.0" ><circle cx="11.75" cy="12" r="11.2" stroke="#111" stroke-width="1.9" fill="#fff"/><path d="M4 4.2L19.5 19.8M19.5 4.2L4 19.8" stroke="#111" stroke-width="1.6"/></svg>
<svg style="left:80px;top:575px" width="23.0" height="17.0" viewBox="0 0 23.0 17.0" ><path d="M5 0.8h13.5c4.5 0 4.5 15.4 0 15.4H5L0.8 8.5Z" stroke="#111" stroke-width="1.9" fill="#fff"/></svg>
<svg style="left:113px;top:571px" width="24.5" height="24.5" viewBox="0 0 24.5 24.5" ><path d="M0.8 0.8h22.9v16L12.25 23.7 0.8 16.8Z" stroke="#111" stroke-width="1.9" fill="#fff"/></svg>
<svg style="left:152px;top:571px" width="20.0" height="24.0" viewBox="0 0 20.0 24.0" ><path d="M0.5 1c2.5 0 3 1 3 3v5c0 2 .8 2.8 2.3 3-1.5.2-2.3 1-2.3 3v5c0 2-.5 3-3 3" fill="none" stroke="#111" stroke-width="1.4"/><g fill="#111"><rect x="8" y="8.5" width="9" height="1.6"/><rect x="8" y="11.3" width="11" height="1.6"/><rect x="8" y="14.1" width="9" height="1.6"/></g></svg>
<svg style="left:180.5px;top:571px" width="22.5" height="24.0" viewBox="0 0 22.5 24.0" ><g fill="#111"><rect x="0" y="8.5" width="9" height="1.6"/><rect x="0" y="11.3" width="11" height="1.6"/><rect x="0" y="14.1" width="9" height="1.6"/></g><path d="M21.5 1c-2.5 0-3 1-3 3v5c0 2-.8 2.8-2.3 3 1.5.2 2.3 1 2.3 3v5c0 2 .5 3 3 3" fill="none" stroke="#111" stroke-width="1.4"/></svg>
<svg style="left:13.5px;top:606px" width="18.5" height="18.0" viewBox="0 0 18.5 18.0" ><path d="M3.5 0.7H1v16.6h2.5" fill="none" stroke="#111" stroke-width="1.4"/><g fill="#111"><rect x="5.5" y="6" width="8" height="1.6"/><rect x="5.5" y="8.8" width="11" height="1.6"/><rect x="5.5" y="11.6" width="8" height="1.6"/></g></svg>
<!-- /LP ICONS -->

<!-- RIGHT STRIP -->
<div class="a rs"></div>


<!-- SLIDES PANEL -->
<div class="a sp"></div>
<div class="a" style="left:944px;top:208.5px;width:35px;height:45px;background:#f0f0f0;box-shadow:0 -1px 1px rgba(0,0,0,0.05),0 1px 1px rgba(0,0,0,0.05)"></div>
<div class="a" style="left:979px;top:92px;width:221px;height:28.5px;background:#7a8089"></div>
<div class="a" style="left:992px;top:100px;color:#fff;font-size:12.5px;line-height:15px;letter-spacing:-0.17px">Slides</div>
<div class="a hline" style="left:980px;top:155px;width:220px;background:#d8d8d8"></div>
<div class="a hline" style="left:980px;top:611px;width:220px;background:#d8d8d8"></div>

<!-- BOTTOM BAR -->
<div class="a bb"></div>
<!-- RIGHT -->
<svg style="left:956px;top:100.5px" width="12.0" height="12.0" viewBox="0 0 12.0 12.0" ><path d="M1 0.8l5 5.2-5 5.2M6.7 0.8l5 5.2-5 5.2" fill="none" stroke="#6d737b" stroke-width="2"/></svg>
<svg style="left:954px;top:132px" width="14.5" height="17.5" viewBox="0 0 14.5 17.5" ><path d="M2.5 1H9.5L13.5 5V15a1.5 1.5 0 0 1-1.5 1.5H2.5A1.5 1.5 0 0 1 1 15V2.5A1.5 1.5 0 0 1 2.5 1Z" fill="none" stroke="#3d4551" stroke-width="1.9"/><path d="M9 0.5L14 5.5H9Z" fill="#3d4551"/><path d="M3.3 9.3h7.6M3.3 13.1h7.6" stroke="#3d4551" stroke-width="1.1"/><circle cx="8.5" cy="9.3" r="1.3" fill="#3d4551"/><circle cx="4.5" cy="13.1" r="1.3" fill="#3d4551"/></svg>
<svg style="left:951.5px;top:177.5px" width="19.5" height="14.5" viewBox="0 0 19.5 14.5" ><path d="M0 0h19.5v14.5H3.5V3Z" fill="#3d4551"/><path d="M7.4 3.9h3.1v3.6L9.3 10.3H8.1l.6-2.8H7.4ZM13.1 3.9h3.3v3.6L15.2 10.3H14l.6-2.8h-1.5Z" fill="#e8e8e8"/></svg>
<svg style="left:951.5px;top:219.5px" width="18.5" height="20.0" viewBox="0 0 18.5 20.0" ><path d="M9.25 0v3" stroke="#3d4551" stroke-width="1.8"/><rect x="1.2" y="3.2" width="16.1" height="10.5" fill="none" stroke="#3d4551" stroke-width="2"/><rect x="0" y="2.5" width="18.5" height="2" fill="#3d4551"/><path d="M7.5 5.8l4.5 2.7-4.5 2.7Z" fill="#3d4551"/><path d="M6.5 14l-1.8 4.5M12 14l1.8 4.5" stroke="#3d4551" stroke-width="1.8"/></svg>
<svg style="left:953px;top:265.5px" width="16.5" height="16.5" viewBox="0 0 16.5 16.5" ><circle cx="8.25" cy="8.25" r="7.2" fill="none" stroke="#3d4551" stroke-width="1.9"/><path d="M8 3.8v4.8l2.5 2.3" fill="none" stroke="#3d4551" stroke-width="1.8"/></svg>
<svg style="left:953px;top:309.5px" width="16.5" height="16.5" viewBox="0 0 16.5 16.5" ><path d="M8.25 1L15.5 5.3 8.25 9.6 1 5.3Z" fill="none" stroke="#3d4551" stroke-width="1.8" stroke-linejoin="round"/><path d="M1.5 8.3l6.75 4 6.75-4M1.5 11.3l6.75 4 6.75-4" fill="none" stroke="#3d4551" stroke-width="1.8" stroke-linejoin="round"/></svg>
<svg style="left:953px;top:353.5px" width="16.5" height="18.5" viewBox="0 0 16.5 18.5" ><path d="M1 1h10l4.5 4.5V17.5H1Z" fill="none" stroke="#3d4551" stroke-width="1.9" stroke-linejoin="miter"/><path d="M8 5.5c1.8 2.4 3 3.9 3 5.6a3 3 0 0 1-6 0c0-1.7 1.2-3.2 3-5.6Z" fill="#3d4551"/></svg>
<svg style="left:952.5px;top:399px" width="17.5" height="16.0" viewBox="0 0 17.5 16.0" ><path d="M8.75 1c4.4 0 7.75 2.6 7.75 6s-3.4 6-7.75 6c-1 0-1.8-.1-2.6-.3L2.5 14.5l1-3C1.9 10.3 1 8.8 1 7c0-3.4 3.4-6 7.75-6Z" fill="none" stroke="#3d4551" stroke-width="1.8" stroke-linejoin="round"/><g fill="#3d4551"><rect x="5.3" y="6.2" width="1.7" height="1.7"/><rect x="7.9" y="6.2" width="1.7" height="1.7"/><rect x="10.5" y="6.2" width="1.7" height="1.7"/></g></svg>
<svg style="left:951px;top:441.5px" width="20.0" height="19.5" viewBox="0 0 20.0 19.5" ><ellipse cx="7.5" cy="2.5" rx="7" ry="2.5" fill="#3d4551"/><path d="M0.5 2.5v11c0 1.5 3 2.5 7 2.5" fill="none" stroke="#3d4551" stroke-width="1.8"/><path d="M14.5 2.5v5" stroke="#3d4551" stroke-width="1.8"/><path d="M0.5 6.5c0 1.5 3 2.5 7 2.5s7-1 7-2.5M0.5 10c0 1.5 3 2.5 7 2.5" fill="none" stroke="#3d4551" stroke-width="1.6"/><path d="M12 13.5l2.5-2.5a2 2 0 0 1 3 3l-1.5 1.5M14.5 12l-3 3a2 2 0 0 0 3 3l1.5-1.5" fill="none" stroke="#3d4551" stroke-width="1.8" stroke-linecap="round"/><path d="M12.8 15.5l3-3" stroke="#3d4551" stroke-width="1.5"/></svg>
<svg style="left:951.5px;top:486.5px" width="19.5" height="18.5" viewBox="0 0 19.5 18.5" ><path d="M4 0.5l1 3 3 1-3 1-1 3-1-3-3-1 3-1ZM11 2.5l.7 2 2 .7-2 .7-.7 2-.7-2-2-.7 2-.7ZM14.8 7.3l.5 1.5 1.5.5-1.5.5-.5 1.5-.5-1.5-1.5-.5 1.5-.5ZM3.2 10.7l.5 1.5 1.5.5-1.5.5-.5 1.5-.5-1.5-1.5-.5 1.5-.5Z" fill="#3d4551"/><path d="M7.5 8.5L17.5 17" stroke="#3d4551" stroke-width="3.4" stroke-linecap="round"/><path d="M8.5 9.3l2 1.7" stroke="#e5e5e5" stroke-width="1"/></svg>
<svg style="left:994px;top:131px" width="16.0" height="16.0" viewBox="0 0 16.0 16.0" ><circle cx="8" cy="8" r="7" fill="none" stroke="#5e6670" stroke-width="1.6"/><path d="M8 4v8M4 8h8" stroke="#5e6670" stroke-width="1.6"/></svg>
<div class="a" style="left:1016px;top:131px;color:#4a525c;font-size:13.5px;line-height:16px;letter-spacing:-0.61px">Slide</div>
<svg style="left:1169px;top:130.5px" width="17.0" height="17.0" viewBox="0 0 17.0 17.0" ><path fill-rule="evenodd" fill="#5e6670" d="M6.98 2.39 L7.12 0.21 L9.88 0.21 L10.02 2.39 L11.75 3.10 L13.38 1.67 L15.33 3.62 L13.90 5.25 L14.61 6.98 L16.79 7.12 L16.79 9.88 L14.61 10.02 L13.90 11.75 L15.33 13.38 L13.38 15.33 L11.75 13.90 L10.02 14.61 L9.88 16.79 L7.12 16.79 L6.98 14.61 L5.25 13.90 L3.62 15.33 L1.67 13.38 L3.10 11.75 L2.39 10.02 L0.21 9.88 L0.21 7.12 L2.39 6.98 L3.10 5.25 L1.67 3.62 L3.62 1.67 L5.25 3.10ZM11.20 8.50A2.7 2.7 0 1 0 5.80 8.50A2.7 2.7 0 1 0 11.20 8.50Z"/></svg>
<div class="a" style="left:1006.5px;top:171px;color:#4a525c;font-size:12.5px;line-height:14px">1</div>
<div class="a" style="left:1006.5px;top:275.5px;color:#4a525c;font-size:12.5px;line-height:14px">2</div>
<div class="a" style="left:1006.5px;top:380px;color:#4a525c;font-size:12.5px;line-height:14px">3</div>
<div class="a" style="left:1006.5px;top:484.5px;color:#4a525c;font-size:12.5px;line-height:14px">4</div>
<div class="a" style="left:1044px;top:625px;width:92px;height:25px;background:#7a8089;border-radius:3px"></div>
<svg style="left:1062px;top:632.5px" width="9.0" height="10.5" viewBox="0 0 9.0 10.5" ><path d="M0 0l9 5.25L0 10.5Z" fill="#fff"/></svg>
<div class="a" style="left:1082px;top:630px;color:#fff;font-size:13px;line-height:15px;letter-spacing:-0.66px">Present</div>
<div class="a" style="left:1009.5px;top:663.5px;width:161px;height:24.5px;background:#efc440;border-radius:3px"></div>
<svg style="left:1023px;top:669px" width="13.0" height="13.0" viewBox="0 0 13.0 13.0" ><rect x="0" y="0" width="13" height="13" rx="1" fill="#fff"/><rect x="2.5" y="4" width="8" height="5" fill="#efc440"/></svg>
<div class="a" style="left:1044px;top:668px;color:#505358;font-size:13px;line-height:15px;letter-spacing:-0.76px">Send to Google Slides</div>
<svg style="left:90px;top:708px" width="19.0" height="15.5" viewBox="0 0 19.0 15.5" ><g fill="#fff"><circle cx="1.3" cy="1.5" r="1.3"/><circle cx="1.3" cy="7.75" r="1.3"/><circle cx="1.3" cy="14" r="1.3"/><rect x="4.5" y="0.5" width="14.5" height="2"/><rect x="4.5" y="6.75" width="14.5" height="2"/><rect x="4.5" y="13" width="14.5" height="2"/></g></svg>
<svg style="left:124px;top:708px" width="16.0" height="15.5" viewBox="0 0 16.0 15.5" ><g fill="#fff"><rect x="0" y="0" width="7.2" height="7.2"/><rect x="8.8" y="0" width="7.2" height="7.2"/><rect x="0" y="8.3" width="7.2" height="7.2"/><rect x="8.8" y="8.3" width="7.2" height="7.2"/></g></svg>
<div class="a" style="left:152.5px;top:701.5px;width:121px;height:24.5px;background:#3e4551;border-radius:0 0 3px 3px"></div>
<div class="a" style="left:161.5px;top:706px;color:#fff;font-size:13px;line-height:15px;letter-spacing:-0.87px">Site Map Example</div>
<svg style="left:257.5px;top:711.5px" width="6.0" height="5.5" viewBox="0 0 6.0 5.5" ><path d="M0 0h6L3 5.5Z" fill="#fff"/></svg>
<svg style="left:285.5px;top:708px" width="16.5" height="16.5" viewBox="0 0 16.5 16.5" ><circle cx="8.25" cy="8.25" r="7.3" fill="none" stroke="#fff" stroke-width="1.7"/><path d="M8.25 4.5v7.5M4.5 8.25h7.5" stroke="#fff" stroke-width="1.7"/></svg>
<div class="a" style="left:937px;top:706.5px;width:1.2px;height:18.5px;background:#3e4551"></div>
<svg style="left:948.5px;top:708px" width="16.5" height="16.5" viewBox="0 0 16.5 16.5" ><circle cx="8.25" cy="8.25" r="7.3" fill="none" stroke="#fff" stroke-width="1.7"/><path d="M8.25 3.3L12 12.5 8.25 10.5 4.5 12.5Z" fill="#fff"/></svg>
<div class="a" style="left:979px;top:715px;width:12.5px;height:1.8px;background:#fff"></div>
<div class="a" style="left:1002px;top:714.5px;width:123px;height:3px;background:#c3c6ca;border-radius:2px"></div>
<div class="a" style="left:1030px;top:710.5px;width:11.5px;height:11.5px;background:#5a9bf0;border-radius:50%"></div>
<svg style="left:1135px;top:709.5px" width="13.0" height="13.0" viewBox="0 0 13.0 13.0" ><path d="M6.5 0v13M0 6.5h13" stroke="#fff" stroke-width="1.8"/></svg>
<div class="a" style="left:1154px;top:709px;color:#fff;font-size:12.5px;line-height:14px;letter-spacing:-0.11px">38%</div>
<svg style="left:1183.5px;top:713px" width="6.5" height="5.5" viewBox="0 0 6.5 5.5" ><path d="M0 0h6.5L3.25 5.5Z" fill="#fff"/></svg>
<!-- /RIGHT -->
<!-- THUMBS -->
<div class="a" style="left:1022.5px;top:169.5px;width:134.5px;height:101.0px;background:#ececec;border-radius:4px;border:1.5px solid #c4c4c4;overflow:hidden"></div>
<svg style="left:1047.5px;top:170.5px;overflow:hidden" width="84.5" height="99.0" viewBox="316.8 254.3 198.2 232.1" font-family="Liberation Sans"><rect x="316.8" y="254.3" width="198.2" height="232.1" fill="#fff"/><path d="M627 302.1V309" fill="none" stroke="#a3a3a3" stroke-width="1"/><path d="M435.1 316V311Q435.1 309 437.1 309H811.5Q813.5 309 813.5 311V316" fill="none" stroke="#a3a3a3" stroke-width="1"/><path d="M550.1 309V316" fill="none" stroke="#a3a3a3" stroke-width="1"/><path d="M665.4 309V316" fill="none" stroke="#a3a3a3" stroke-width="1"/><path d="M435.1 356.8V364" fill="none" stroke="#a3a3a3" stroke-width="1"/><path d="M389 370.7V366Q389 364 391 364H479.1Q481.1 364 481.1 366V370.7" fill="none" stroke="#a3a3a3" stroke-width="1"/><path d="M389 411.4V418" fill="none" stroke="#a3a3a3" stroke-width="1"/><path d="M358.1 425.4V420Q358.1 418 360.1 418H417.4Q419.4 418 419.4 420V425.4" fill="none" stroke="#a3a3a3" stroke-width="1"/><path d="M665.4 356.8V370.7" fill="none" stroke="#a3a3a3" stroke-width="1"/><path d="M665.4 411.4V418" fill="none" stroke="#a3a3a3" stroke-width="1"/><path d="M603.8 425.4V420Q603.8 418 605.8 418H724.5Q726.5 418 726.5 420V425.4" fill="none" stroke="#a3a3a3" stroke-width="1"/><path d="M665.4 418V425.4" fill="none" stroke="#a3a3a3" stroke-width="1"/><path d="M813.5 356.8V363.6" fill="none" stroke="#a3a3a3" stroke-width="1"/><path d="M782.8 370.8V365.6Q782.8 363.6 784.8 363.6H842.1Q844.1 363.6 844.1 365.6V370.8" fill="none" stroke="#a3a3a3" stroke-width="1"/><rect x="600" y="261.4" width="54.0" height="40.7" rx="1.5" fill="#6a9bde"/><text x="627.0" y="284.1" font-size="6.6" fill="#fff" text-anchor="middle">Home</text><rect x="408" y="316" width="54.2" height="40.8" rx="1.5" fill="#f0858a"/><text x="435.1" y="338.7" font-size="6.6" fill="#333" text-anchor="middle">About</text><rect x="523" y="316" width="54.2" height="40.8" rx="1.5" fill="#f0858a"/><text x="550.1" y="338.7" font-size="6.6" fill="#333" text-anchor="middle">Products</text><rect x="638.3" y="316" width="54.2" height="40.8" rx="1.5" fill="#f0858a"/><text x="665.4" y="338.7" font-size="6.6" fill="#333" text-anchor="middle">Pricing</text><rect x="786.3" y="316" width="54.3" height="40.8" rx="1.5" fill="#f0858a"/><text x="813.5" y="338.7" font-size="6.6" fill="#333" text-anchor="middle">Blog</text><rect x="361.9" y="370.7" width="54.2" height="40.7" rx="1.5" fill="#f2a262"/><text x="389.0" y="393.3" font-size="6.6" fill="#333" text-anchor="middle">Our team</text><rect x="454" y="370.7" width="54.2" height="40.7" rx="1.5" fill="#f2a262"/><text x="481.1" y="393.3" font-size="6.6" fill="#333" text-anchor="middle">Mission statement</text><rect x="638.3" y="370.7" width="54.2" height="40.7" rx="1.5" fill="#f2a262"/><text x="665.4" y="389.8" font-size="6.6" fill="#333" text-anchor="middle">Compare</text><text x="665.4" y="397.3" font-size="6.6" fill="#333" text-anchor="middle">packages</text><rect x="755.7" y="370.8" width="54.3" height="40.3" rx="1.5" fill="#f2a262"/><text x="782.9" y="393.3" font-size="6.6" fill="#333" text-anchor="middle">Support</text><rect x="816.9" y="370.8" width="54.4" height="40.3" rx="1.5" fill="#f2a262"/><text x="844.1" y="393.3" font-size="6.6" fill="#333" text-anchor="middle">FAQ</text><rect x="331" y="425.4" width="54.3" height="40.3" rx="1.5" fill="#f7cd80"/><text x="358.1" y="447.8" font-size="6.6" fill="#333" text-anchor="middle">Management</text><rect x="392.2" y="425.4" width="54.4" height="40.3" rx="1.5" fill="#f7cd80"/><text x="419.4" y="447.8" font-size="6.6" fill="#333" text-anchor="middle">Contact Us</text><rect x="576.7" y="425.4" width="54.3" height="40.3" rx="1.5" fill="#f7cd80"/><text x="603.9" y="447.8" font-size="6.6" fill="#333" text-anchor="middle">Basic</text><rect x="638.3" y="425.4" width="54.2" height="40.3" rx="1.5" fill="#f7cd80"/><text x="665.4" y="447.8" font-size="6.6" fill="#333" text-anchor="middle">Pro</text><rect x="699.4" y="425.4" width="54.3" height="40.3" rx="1.5" fill="#f7cd80"/><text x="726.5" y="447.8" font-size="6.6" fill="#333" text-anchor="middle">Premium</text><rect x="767.3" y="513.1" width="109.7" height="89.4" rx="10" fill="#fff" stroke="#6b6b6b" stroke-width="1"/><text x="822.2" y="525" font-size="7" font-weight="bold" fill="#333" text-anchor="middle">Legend</text><rect x="783.7" y="534.2" width="18.3" height="13.5" rx="1.5" fill="#f0858a"/><text x="804.7" y="543.0" font-size="6.3" fill="#444">Top-level navigation</text><rect x="783.7" y="554.7" width="18.3" height="13.5" rx="1.5" fill="#f2a262"/><text x="804.7" y="563.5" font-size="6.3" fill="#444">2nd-level Content</text><rect x="783.7" y="575" width="18.3" height="13.5" rx="1.5" fill="#f7cd80"/><text x="804.7" y="583.8" font-size="6.3" fill="#444">3rd-level Content</text><rect x="317.8" y="255.3" width="196.2" height="230.1" fill="none" stroke="#f8cfa3" stroke-width="1.00" stroke-dasharray="6 4"/><circle cx="316.8" cy="254.3" r="5.5" fill="#ec8e3a"/><circle cx="515.0" cy="254.3" r="5.5" fill="#ec8e3a"/></svg>
<div class="a" style="left:1022.5px;top:274px;width:134.5px;height:100.5px;background:#ececec;border-radius:4px;border:2px solid #f4a05a;box-shadow:0 0 3px 1px rgba(244,160,90,0.6);overflow:hidden"></div>
<svg style="left:1038.7px;top:275.0px;overflow:hidden" width="102.1" height="98.5" viewBox="515.1 254.3 240.6 232.1" font-family="Liberation Sans"><rect x="515.1" y="254.3" width="240.6" height="232.1" fill="#fff"/><path d="M627 302.1V309" fill="none" stroke="#a3a3a3" stroke-width="1"/><path d="M435.1 316V311Q435.1 309 437.1 309H811.5Q813.5 309 813.5 311V316" fill="none" stroke="#a3a3a3" stroke-width="1"/><path d="M550.1 309V316" fill="none" stroke="#a3a3a3" stroke-width="1"/><path d="M665.4 309V316" fill="none" stroke="#a3a3a3" stroke-width="1"/><path d="M435.1 356.8V364" fill="none" stroke="#a3a3a3" stroke-width="1"/><path d="M389 370.7V366Q389 364 391 364H479.1Q481.1 364 481.1 366V370.7" fill="none" stroke="#a3a3a3" stroke-width="1"/><path d="M389 411.4V418" fill="none" stroke="#a3a3a3" stroke-width="1"/><path d="M358.1 425.4V420Q358.1 418 360.1 418H417.4Q419.4 418 419.4 420V425.4" fill="none" stroke="#a3a3a3" stroke-width="1"/><path d="M665.4 356.8V370.7" fill="none" stroke="#a3a3a3" stroke-width="1"/><path d="M665.4 411.4V418" fill="none" stroke="#a3a3a3" stroke-width="1"/><path d="M603.8 425.4V420Q603.8 418 605.8 418H724.5Q726.5 418 726.5 420V425.4" fill="none" stroke="#a3a3a3" stroke-width="1"/><path d="M665.4 418V425.4" fill="none" stroke="#a3a3a3" stroke-width="1"/><path d="M813.5 356.8V363.6" fill="none" stroke="#a3a3a3" stroke-width="1"/><path d="M782.8 370.8V365.6Q782.8 363.6 784.8 363.6H842.1Q844.1 363.6 844.1 365.6V370.8" fill="none" stroke="#a3a3a3" stroke-width="1"/><rect x="600" y="261.4" width="54.0" height="40.7" rx="1.5" fill="#6a9bde"/><text x="627.0" y="284.1" font-size="6.6" fill="#fff" text-anchor="middle">Home</text><rect x="408" y="316" width="54.2" height="40.8" rx="1.5" fill="#f0858a"/><text x="435.1" y="338.7" font-size="6.6" fill="#333" text-anchor="middle">About</text><rect x="523" y="316" width="54.2" height="40.8" rx="1.5" fill="#f0858a"/><text x="550.1" y="338.7" font-size="6.6" fill="#333" text-anchor="middle">Products</text><rect x="638.3" y="316" width="54.2" height="40.8" rx="1.5" fill="#f0858a"/><text x="665.4" y="338.7" font-size="6.6" fill="#333" text-anchor="middle">Pricing</text><rect x="786.3" y="316" width="54.3" height="40.8" rx="1.5" fill="#f0858a"/><text x="813.5" y="338.7" font-size="6.6" fill="#333" text-anchor="middle">Blog</text><rect x="361.9" y="370.7" width="54.2" height="40.7" rx="1.5" fill="#f2a262"/><text x="389.0" y="393.3" font-size="6.6" fill="#333" text-anchor="middle">Our team</text><rect x="454" y="370.7" width="54.2" height="40.7" rx="1.5" fill="#f2a262"/><text x="481.1" y="393.3" font-size="6.6" fill="#333" text-anchor="middle">Mission statement</text><rect x="638.3" y="370.7" width="54.2" height="40.7" rx="1.5" fill="#f2a262"/><text x="665.4" y="389.8" font-size="6.6" fill="#333" text-anchor="middle">Compare</text><text x="665.4" y="397.3" font-size="6.6" fill="#333" text-anchor="middle">packages</text><rect x="755.7" y="370.8" width="54.3" height="40.3" rx="1.5" fill="#f2a262"/><text x="782.9" y="393.3" font-size="6.6" fill="#333" text-anchor="middle">Support</text><rect x="816.9" y="370.8" width="54.4" height="40.3" rx="1.5" fill="#f2a262"/><text x="844.1" y="393.3" font-size="6.6" fill="#333" text-anchor="middle">FAQ</text><rect x="331" y="425.4" width="54.3" height="40.3" rx="1.5" fill="#f7cd80"/><text x="358.1" y="447.8" font-size="6.6" fill="#333" text-anchor="middle">Management</text><rect x="392.2" y="425.4" width="54.4" height="40.3" rx="1.5" fill="#f7cd80"/><text x="419.4" y="447.8" font-size="6.6" fill="#333" text-anchor="middle">Contact Us</text><rect x="576.7" y="425.4" width="54.3" height="40.3" rx="1.5" fill="#f7cd80"/><text x="603.9" y="447.8" font-size="6.6" fill="#333" text-anchor="middle">Basic</text><rect x="638.3" y="425.4" width="54.2" height="40.3" rx="1.5" fill="#f7cd80"/><text x="665.4" y="447.8" font-size="6.6" fill="#333" text-anchor="middle">Pro</text><rect x="699.4" y="425.4" width="54.3" height="40.3" rx="1.5" fill="#f7cd80"/><text x="726.5" y="447.8" font-size="6.6" fill="#333" text-anchor="middle">Premium</text><rect x="767.3" y="513.1" width="109.7" height="89.4" rx="10" fill="#fff" stroke="#6b6b6b" stroke-width="1"/><text x="822.2" y="525" font-size="7" font-weight="bold" fill="#333" text-anchor="middle">Legend</text><rect x="783.7" y="534.2" width="18.3" height="13.5" rx="1.5" fill="#f0858a"/><text x="804.7" y="543.0" font-size="6.3" fill="#444">Top-level navigation</text><rect x="783.7" y="554.7" width="18.3" height="13.5" rx="1.5" fill="#f2a262"/><text x="804.7" y="563.5" font-size="6.3" fill="#444">2nd-level Content</text><rect x="783.7" y="575" width="18.3" height="13.5" rx="1.5" fill="#f7cd80"/><text x="804.7" y="583.8" font-size="6.3" fill="#444">3rd-level Content</text><rect x="516.1" y="255.3" width="238.6" height="230.1" fill="none" stroke="#f8cfa3" stroke-width="1.00" stroke-dasharray="6 4"/><circle cx="515.1" cy="254.3" r="5.5" fill="#ec8e3a"/><circle cx="755.7" cy="254.3" r="5.5" fill="#ec8e3a"/></svg>
<div class="a" style="left:1022.5px;top:379px;width:134.5px;height:100.5px;background:#ececec;border-radius:4px;border:1.5px solid #c4c4c4;overflow:hidden"></div>
<svg style="left:1048.8px;top:380.0px;overflow:hidden" width="82.0" height="98.5" viewBox="755.7 254.3 141.7 170.3" font-family="Liberation Sans"><rect x="755.7" y="254.3" width="141.7" height="170.3" fill="#fff"/><path d="M627 302.1V309" fill="none" stroke="#a3a3a3" stroke-width="1"/><path d="M435.1 316V311Q435.1 309 437.1 309H811.5Q813.5 309 813.5 311V316" fill="none" stroke="#a3a3a3" stroke-width="1"/><path d="M550.1 309V316" fill="none" stroke="#a3a3a3" stroke-width="1"/><path d="M665.4 309V316" fill="none" stroke="#a3a3a3" stroke-width="1"/><path d="M435.1 356.8V364" fill="none" stroke="#a3a3a3" stroke-width="1"/><path d="M389 370.7V366Q389 364 391 364H479.1Q481.1 364 481.1 366V370.7" fill="none" stroke="#a3a3a3" stroke-width="1"/><path d="M389 411.4V418" fill="none" stroke="#a3a3a3" stroke-width="1"/><path d="M358.1 425.4V420Q358.1 418 360.1 418H417.4Q419.4 418 419.4 420V425.4" fill="none" stroke="#a3a3a3" stroke-width="1"/><path d="M665.4 356.8V370.7" fill="none" stroke="#a3a3a3" stroke-width="1"/><path d="M665.4 411.4V418" fill="none" stroke="#a3a3a3" stroke-width="1"/><path d="M603.8 425.4V420Q603.8 418 605.8 418H724.5Q726.5 418 726.5 420V425.4" fill="none" stroke="#a3a3a3" stroke-width="1"/><path d="M665.4 418V425.4" fill="none" stroke="#a3a3a3" stroke-width="1"/><path d="M813.5 356.8V363.6" fill="none" stroke="#a3a3a3" stroke-width="1"/><path d="M782.8 370.8V365.6Q782.8 363.6 784.8 363.6H842.1Q844.1 363.6 844.1 365.6V370.8" fill="none" stroke="#a3a3a3" stroke-width="1"/><rect x="600" y="261.4" width="54.0" height="40.7" rx="1.5" fill="#6a9bde"/><text x="627.0" y="284.1" font-size="6.6" fill="#fff" text-anchor="middle">Home</text><rect x="408" y="316" width="54.2" height="40.8" rx="1.5" fill="#f0858a"/><text x="435.1" y="338.7" font-size="6.6" fill="#333" text-anchor="middle">About</text><rect x="523" y="316" width="54.2" height="40.8" rx="1.5" fill="#f0858a"/><text x="550.1" y="338.7" font-size="6.6" fill="#333" text-anchor="middle">Products</text><rect x="638.3" y="316" width="54.2" height="40.8" rx="1.5" fill="#f0858a"/><text x="665.4" y="338.7" font-size="6.6" fill="#333" text-anchor="middle">Pricing</text><rect x="786.3" y="316" width="54.3" height="40.8" rx="1.5" fill="#f0858a"/><text x="813.5" y="338.7" font-size="6.6" fill="#333" text-anchor="middle">Blog</text><rect x="361.9" y="370.7" width="54.2" height="40.7" rx="1.5" fill="#f2a262"/><text x="389.0" y="393.3" font-size="6.6" fill="#333" text-anchor="middle">Our team</text><rect x="454" y="370.7" width="54.2" height="40.7" rx="1.5" fill="#f2a262"/><text x="481.1" y="393.3" font-size="6.6" fill="#333" text-anchor="middle">Mission statement</text><rect x="638.3" y="370.7" width="54.2" height="40.7" rx="1.5" fill="#f2a262"/><text x="665.4" y="389.8" font-size="6.6" fill="#333" text-anchor="middle">Compare</text><text x="665.4" y="397.3" font-size="6.6" fill="#333" text-anchor="middle">packages</text><rect x="755.7" y="370.8" width="54.3" height="40.3" rx="1.5" fill="#f2a262"/><text x="782.9" y="393.3" font-size="6.6" fill="#333" text-anchor="middle">Support</text><rect x="816.9" y="370.8" width="54.4" height="40.3" rx="1.5" fill="#f2a262"/><text x="844.1" y="393.3" font-size="6.6" fill="#333" text-anchor="middle">FAQ</text><rect x="331" y="425.4" width="54.3" height="40.3" rx="1.5" fill="#f7cd80"/><text x="358.1" y="447.8" font-size="6.6" fill="#333" text-anchor="middle">Management</text><rect x="392.2" y="425.4" width="54.4" height="40.3" rx="1.5" fill="#f7cd80"/><text x="419.4" y="447.8" font-size="6.6" fill="#333" text-anchor="middle">Contact Us</text><rect x="576.7" y="425.4" width="54.3" height="40.3" rx="1.5" fill="#f7cd80"/><text x="603.9" y="447.8" font-size="6.6" fill="#333" text-anchor="middle">Basic</text><rect x="638.3" y="425.4" width="54.2" height="40.3" rx="1.5" fill="#f7cd80"/><text x="665.4" y="447.8" font-size="6.6" fill="#333" text-anchor="middle">Pro</text><rect x="699.4" y="425.4" width="54.3" height="40.3" rx="1.5" fill="#f7cd80"/><text x="726.5" y="447.8" font-size="6.6" fill="#333" text-anchor="middle">Premium</text><rect x="767.3" y="513.1" width="109.7" height="89.4" rx="10" fill="#fff" stroke="#6b6b6b" stroke-width="1"/><text x="822.2" y="525" font-size="7" font-weight="bold" fill="#333" text-anchor="middle">Legend</text><rect x="783.7" y="534.2" width="18.3" height="13.5" rx="1.5" fill="#f0858a"/><text x="804.7" y="543.0" font-size="6.3" fill="#444">Top-level navigation</text><rect x="783.7" y="554.7" width="18.3" height="13.5" rx="1.5" fill="#f2a262"/><text x="804.7" y="563.5" font-size="6.3" fill="#444">2nd-level Content</text><rect x="783.7" y="575" width="18.3" height="13.5" rx="1.5" fill="#f7cd80"/><text x="804.7" y="583.8" font-size="6.3" fill="#444">3rd-level Content</text><rect x="756.7" y="255.3" width="139.7" height="168.3" fill="none" stroke="#f8cfa3" stroke-width="1.00" stroke-dasharray="6 4"/><circle cx="755.7" cy="254.3" r="5.5" fill="#ec8e3a"/></svg>
<div class="a" style="left:1022.5px;top:484px;width:135.0px;height:100.5px;background:#ececec;border-radius:4px;border:1.5px solid #c4c4c4;overflow:hidden"></div>
<svg style="left:1025.7px;top:485.0px;overflow:hidden" width="128.6" height="98.5" viewBox="747 500.2 150.4 115.2" font-family="Liberation Sans"><rect x="747" y="500.2" width="150.4" height="115.2" fill="#fff"/><path d="M627 302.1V309" fill="none" stroke="#a3a3a3" stroke-width="1"/><path d="M435.1 316V311Q435.1 309 437.1 309H811.5Q813.5 309 813.5 311V316" fill="none" stroke="#a3a3a3" stroke-width="1"/><path d="M550.1 309V316" fill="none" stroke="#a3a3a3" stroke-width="1"/><path d="M665.4 309V316" fill="none" stroke="#a3a3a3" stroke-width="1"/><path d="M435.1 356.8V364" fill="none" stroke="#a3a3a3" stroke-width="1"/><path d="M389 370.7V366Q389 364 391 364H479.1Q481.1 364 481.1 366V370.7" fill="none" stroke="#a3a3a3" stroke-width="1"/><path d="M389 411.4V418" fill="none" stroke="#a3a3a3" stroke-width="1"/><path d="M358.1 425.4V420Q358.1 418 360.1 418H417.4Q419.4 418 419.4 420V425.4" fill="none" stroke="#a3a3a3" stroke-width="1"/><path d="M665.4 356.8V370.7" fill="none" stroke="#a3a3a3" stroke-width="1"/><path d="M665.4 411.4V418" fill="none" stroke="#a3a3a3" stroke-width="1"/><path d="M603.8 425.4V420Q603.8 418 605.8 418H724.5Q726.5 418 726.5 420V425.4" fill="none" stroke="#a3a3a3" stroke-width="1"/><path d="M665.4 418V425.4" fill="none" stroke="#a3a3a3" stroke-width="1"/><path d="M813.5 356.8V363.6" fill="none" stroke="#a3a3a3" stroke-width="1"/><path d="M782.8 370.8V365.6Q782.8 363.6 784.8 363.6H842.1Q844.1 363.6 844.1 365.6V370.8" fill="none" stroke="#a3a3a3" stroke-width="1"/><rect x="600" y="261.4" width="54.0" height="40.7" rx="1.5" fill="#6a9bde"/><text x="627.0" y="284.1" font-size="6.6" fill="#fff" text-anchor="middle">Home</text><rect x="408" y="316" width="54.2" height="40.8" rx="1.5" fill="#f0858a"/><text x="435.1" y="338.7" font-size="6.6" fill="#333" text-anchor="middle">About</text><rect x="523" y="316" width="54.2" height="40.8" rx="1.5" fill="#f0858a"/><text x="550.1" y="338.7" font-size="6.6" fill="#333" text-anchor="middle">Products</text><rect x="638.3" y="316" width="54.2" height="40.8" rx="1.5" fill="#f0858a"/><text x="665.4" y="338.7" font-size="6.6" fill="#333" text-anchor="middle">Pricing</text><rect x="786.3" y="316" width="54.3" height="40.8" rx="1.5" fill="#f0858a"/><text x="813.5" y="338.7" font-size="6.6" fill="#333" text-anchor="middle">Blog</text><rect x="361.9" y="370.7" width="54.2" height="40.7" rx="1.5" fill="#f2a262"/><text x="389.0" y="393.3" font-size="6.6" fill="#333" text-anchor="middle">Our team</text><rect x="454" y="370.7" width="54.2" height="40.7" rx="1.5" fill="#f2a262"/><text x="481.1" y="393.3" font-size="6.6" fill="#333" text-anchor="middle">Mission statement</text><rect x="638.3" y="370.7" width="54.2" height="40.7" rx="1.5" fill="#f2a262"/><text x="665.4" y="389.8" font-size="6.6" fill="#333" text-anchor="middle">Compare</text><text x="665.4" y="397.3" font-size="6.6" fill="#333" text-anchor="middle">packages</text><rect x="755.7" y="370.8" width="54.3" height="40.3" rx="1.5" fill="#f2a262"/><text x="782.9" y="393.3" font-size="6.6" fill="#333" text-anchor="middle">Support</text><rect x="816.9" y="370.8" width="54.4" height="40.3" rx="1.5" fill="#f2a262"/><text x="844.1" y="393.3" font-size="6.6" fill="#333" text-anchor="middle">FAQ</text><rect x="331" y="425.4" width="54.3" height="40.3" rx="1.5" fill="#f7cd80"/><text x="358.1" y="447.8" font-size="6.6" fill="#333" text-anchor="middle">Management</text><rect x="392.2" y="425.4" width="54.4" height="40.3" rx="1.5" fill="#f7cd80"/><text x="419.4" y="447.8" font-size="6.6" fill="#333" text-anchor="middle">Contact Us</text><rect x="576.7" y="425.4" width="54.3" height="40.3" rx="1.5" fill="#f7cd80"/><text x="603.9" y="447.8" font-size="6.6" fill="#333" text-anchor="middle">Basic</text><rect x="638.3" y="425.4" width="54.2" height="40.3" rx="1.5" fill="#f7cd80"/><text x="665.4" y="447.8" font-size="6.6" fill="#333" text-anchor="middle">Pro</text><rect x="699.4" y="425.4" width="54.3" height="40.3" rx="1.5" fill="#f7cd80"/><text x="726.5" y="447.8" font-size="6.6" fill="#333" text-anchor="middle">Premium</text><rect x="767.3" y="513.1" width="109.7" height="89.4" rx="10" fill="#fff" stroke="#6b6b6b" stroke-width="1"/><text x="822.2" y="525" font-size="7" font-weight="bold" fill="#333" text-anchor="middle">Legend</text><rect x="783.7" y="534.2" width="18.3" height="13.5" rx="1.5" fill="#f0858a"/><text x="804.7" y="543.0" font-size="6.3" fill="#444">Top-level navigation</text><rect x="783.7" y="554.7" width="18.3" height="13.5" rx="1.5" fill="#f2a262"/><text x="804.7" y="563.5" font-size="6.3" fill="#444">2nd-level Content</text><rect x="783.7" y="575" width="18.3" height="13.5" rx="1.5" fill="#f7cd80"/><text x="804.7" y="583.8" font-size="6.3" fill="#444">3rd-level Content</text><rect x="748" y="501.2" width="148.4" height="113.2" fill="none" stroke="#f8cfa3" stroke-width="1.00" stroke-dasharray="6 4"/><circle cx="747" cy="500.2" r="5.5" fill="#ec8e3a"/></svg>
<!-- /THUMBS -->

</body></html>
